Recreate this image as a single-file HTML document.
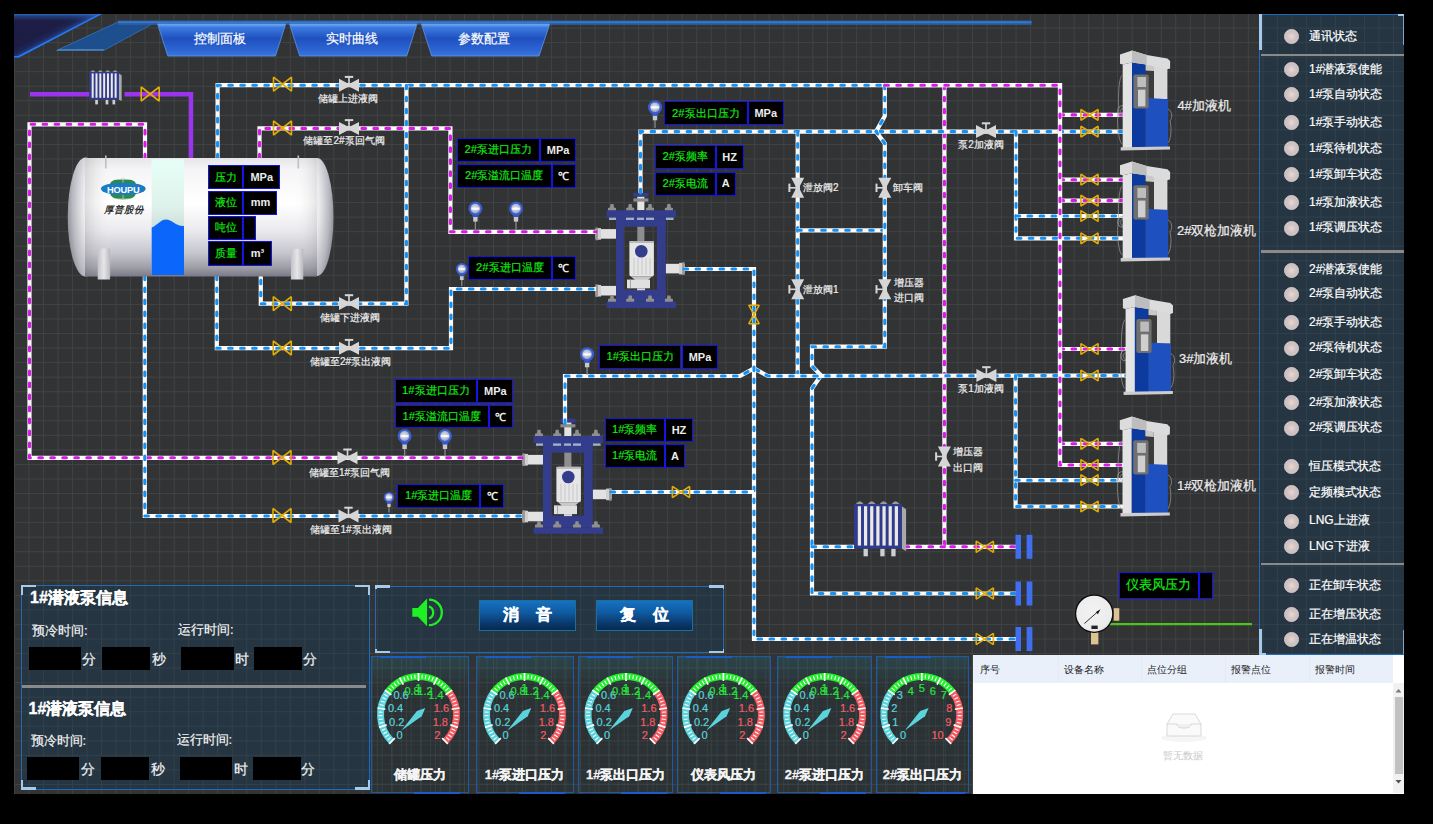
<!DOCTYPE html><html><head><meta charset="utf-8"><title>SCADA</title><style>
*{margin:0;padding:0;box-sizing:border-box}
html,body{width:1433px;height:824px;overflow:hidden;background:#000;font-family:"Liberation Sans",sans-serif}
#main{position:absolute;left:14px;top:14px;width:1390px;height:780px;background-color:#323335;
 background-image:linear-gradient(to right,#414244 1px,transparent 1px),linear-gradient(to bottom,#414244 1px,transparent 1px);
 background-size:14.52px 14.55px;background-position:0 -1px}
svg.full{position:absolute;left:0;top:0;width:1433px;height:824px}
.lb{position:absolute;white-space:nowrap;font-family:"Liberation Sans",sans-serif;-webkit-text-stroke:0.2px #f4f4f4}
.tb{position:absolute;background:#000;border:1.5px solid #1414e6;font-size:11px;color:#fff;font-weight:bold;
 display:flex;align-items:center;justify-content:center;white-space:nowrap;padding-bottom:0.5px}
.tb .g{color:#12f012;font-weight:normal;font-size:11.2px;-webkit-text-stroke:0.15px #12f012}
.tu{color:#ececec}
.tab{position:absolute;top:22.8px;height:32px;line-height:32px;text-align:center;color:#fff;font-size:13px;-webkit-text-stroke:0.2px #fff}
.panel{position:absolute;background-color:rgba(12,60,92,0.32);border:1.5px solid #1f6bb5}
.st{position:absolute;left:1284px;height:20px;width:120px}
.st i{position:absolute;left:0;top:2.5px;width:15px;height:15px;border-radius:50%;
 border:1.4px solid #ead0d0;background:radial-gradient(circle at 50% 50%,#f8d2d2 0,#d6c8c8 35%,#c2bfbf 70%,#bcbcbc 100%)}
.st span{position:absolute;left:25px;top:-1px;line-height:20px;font-size:12px;color:#fff;white-space:nowrap;-webkit-text-stroke:0.2px #fff}
.sep{position:absolute;height:2.5px;background:#8a8a8a}
.corner{position:absolute;width:15px;height:15px;border-color:#a6cbea;border-style:solid;border-width:0}
.blk{position:absolute;background:#000}
.it{position:absolute;font-size:13px;color:#f4f4f4;white-space:nowrap;-webkit-text-stroke:0.2px #f4f4f4}
.btn{position:absolute;top:600px;width:97px;height:31px;background:linear-gradient(to bottom,#1572c2 0%,#0f5aa0 40%,#0a3a6e 75%,#062a52 100%);
 border:1px solid #1f6e98;color:#fff;font-weight:bold;font-size:16px;line-height:27px;text-align:center;letter-spacing:17px;padding-left:17px;-webkit-text-stroke:0.3px #fff}
.gp{position:absolute;top:656px;height:137px;border:1px solid #1a5aa8;
 background-color:rgba(10,40,50,0.12);
 background-image:linear-gradient(to bottom,rgba(40,170,190,0.16),rgba(40,170,190,0) 22%),linear-gradient(to right,rgba(40,150,160,0.15) 1px,transparent 1px),linear-gradient(to bottom,rgba(60,120,130,0.09) 1px,transparent 1px);
 background-size:100% 100%,9.7px 9.7px,9.7px 9.7px}
.gt{position:absolute;top:764.8px;height:20px;line-height:20px;text-align:center;color:#f4f4f4;font-weight:bold;font-size:13px;white-space:nowrap;-webkit-text-stroke:0.3px #f4f4f4}
.th{position:absolute;top:663px;font-size:10px;color:#1a1a1a;white-space:nowrap}
</style></head><body><div id="main"></div><div class="panel" style="left:1259px;top:14px;width:145px;height:640.5px;border-width:1.5px 0 1.5px 1.5px"></div><div class="gp" style="left:371px;width:97.60000000000002px"></div><div style="position:absolute;left:380px;top:655.5px;width:46px;height:2px;background:#1a5cc8"></div><div style="position:absolute;left:414px;top:791.5px;width:46px;height:2px;background:#1a5cc8"></div><div class="gt" style="left:371px;width:97.60000000000002px">储罐压力</div><div class="gp" style="left:475.6px;width:98.0px"></div><div style="position:absolute;left:484.6px;top:655.5px;width:46px;height:2px;background:#1a5cc8"></div><div style="position:absolute;left:518.6px;top:791.5px;width:46px;height:2px;background:#1a5cc8"></div><div class="gt" style="left:475.6px;width:98.0px">1#泵进口压力</div><div class="gp" style="left:578px;width:95.39999999999998px"></div><div style="position:absolute;left:587px;top:655.5px;width:46px;height:2px;background:#1a5cc8"></div><div style="position:absolute;left:621px;top:791.5px;width:46px;height:2px;background:#1a5cc8"></div><div class="gt" style="left:578px;width:95.39999999999998px">1#泵出口压力</div><div class="gp" style="left:677px;width:93.70000000000005px"></div><div style="position:absolute;left:686px;top:655.5px;width:46px;height:2px;background:#1a5cc8"></div><div style="position:absolute;left:720px;top:791.5px;width:46px;height:2px;background:#1a5cc8"></div><div class="gt" style="left:677px;width:93.70000000000005px">仪表风压力</div><div class="gp" style="left:777px;width:94.79999999999995px"></div><div style="position:absolute;left:786px;top:655.5px;width:46px;height:2px;background:#1a5cc8"></div><div style="position:absolute;left:820px;top:791.5px;width:46px;height:2px;background:#1a5cc8"></div><div class="gt" style="left:777px;width:94.79999999999995px">2#泵进口压力</div><div class="gp" style="left:876px;width:93px"></div><div style="position:absolute;left:885px;top:655.5px;width:46px;height:2px;background:#1a5cc8"></div><div style="position:absolute;left:919px;top:791.5px;width:46px;height:2px;background:#1a5cc8"></div><div class="gt" style="left:876px;width:93px">2#泵出口压力</div><div style="position:absolute;left:1259px;top:14px;width:2.5px;height:36px;background:#a6cbea"></div><div style="position:absolute;left:1402.5px;top:14px;width:1.2px;height:31px;background:#7fa6c8"></div><div style="position:absolute;left:1398px;top:14px;width:6px;height:2px;background:#a6cbea"></div><div style="position:absolute;left:1259px;top:629px;width:2.5px;height:25.5px;background:#a6cbea"></div><div style="position:absolute;left:1259px;top:652.5px;width:7px;height:2px;background:#a6cbea"></div><div style="position:absolute;left:1402.5px;top:630px;width:1.2px;height:24px;background:#7fa6c8"></div><svg class="full" viewBox="0 0 1433 824"><defs>
<linearGradient id="tankV" x1="0" y1="0" x2="0" y2="1">
 <stop offset="0" stop-color="#e6e6ea"/><stop offset="0.1" stop-color="#f5f5f7"/><stop offset="0.38" stop-color="#ffffff"/>
 <stop offset="0.6" stop-color="#ececf0"/><stop offset="0.8" stop-color="#c6c6ce"/><stop offset="0.92" stop-color="#a0a0aa"/><stop offset="1" stop-color="#7a7a86"/>
</linearGradient>
<linearGradient id="tankH" x1="0" y1="0" x2="1" y2="0">
 <stop offset="0" stop-color="#777" stop-opacity="0.25"/><stop offset="0.12" stop-color="#fff" stop-opacity="0"/>
 <stop offset="0.9" stop-color="#fff" stop-opacity="0"/><stop offset="1" stop-color="#777" stop-opacity="0.2"/>
</linearGradient>
<radialGradient id="capL" cx="0.85" cy="0.38" r="0.9">
 <stop offset="0" stop-color="#ffffff"/><stop offset="0.45" stop-color="#ececf0"/><stop offset="0.8" stop-color="#b8b8c0"/><stop offset="1" stop-color="#8a8a94"/>
</radialGradient>
<radialGradient id="capR" cx="0.15" cy="0.38" r="0.9">
 <stop offset="0" stop-color="#ffffff"/><stop offset="0.45" stop-color="#ececf0"/><stop offset="0.8" stop-color="#b8b8c0"/><stop offset="1" stop-color="#8a8a94"/>
</radialGradient>
<linearGradient id="legG" x1="0" y1="0" x2="1" y2="0">
 <stop offset="0" stop-color="#c2c2c8"/><stop offset="0.5" stop-color="#e6e6ea"/><stop offset="1" stop-color="#b8b8be"/>
</linearGradient>
<linearGradient id="lvlG" x1="0" y1="0" x2="0" y2="1">
 <stop offset="0" stop-color="#e6fff6"/><stop offset="0.4" stop-color="#dff2ec"/><stop offset="0.62" stop-color="#c9ddd7"/><stop offset="1" stop-color="#b8ccc6"/>
</linearGradient>
<radialGradient id="sensg" cx="0.45" cy="0.45" r="0.6">
 <stop offset="0" stop-color="#e8eaf0"/><stop offset="0.6" stop-color="#b8bed0"/><stop offset="1" stop-color="#7f8fc8"/>
</radialGradient>
<radialGradient id="pgG" cx="0.45" cy="0.4" r="0.7">
 <stop offset="0" stop-color="#f2f2f2"/><stop offset="0.75" stop-color="#ececec"/><stop offset="1" stop-color="#d8d8d8"/>
</radialGradient>
<linearGradient id="tabG" x1="0" y1="0" x2="0" y2="1">
 <stop offset="0" stop-color="#78b0f6"/><stop offset="0.1" stop-color="#3d7ce0"/><stop offset="0.45" stop-color="#1f50bf"/><stop offset="0.85" stop-color="#2e68d4"/><stop offset="1" stop-color="#3a78e0"/>
</linearGradient>
<linearGradient id="cornD" gradientUnits="userSpaceOnUse" x1="55.4" y1="26.1" x2="60.5" y2="35.75">
 <stop offset="0" stop-color="#2a6ad8" stop-opacity="0"/><stop offset="0.5" stop-color="#2a6ad8" stop-opacity="0.12"/><stop offset="1" stop-color="#2a6ad8" stop-opacity="0.6"/>
</linearGradient>
<linearGradient id="cornT" gradientUnits="userSpaceOnUse" x1="0" y1="14" x2="0" y2="21">
 <stop offset="0" stop-color="#2f78d0" stop-opacity="0.8"/><stop offset="0.35" stop-color="#2f78d0" stop-opacity="0.35"/><stop offset="1" stop-color="#2f78d0" stop-opacity="0"/>
</linearGradient>
<linearGradient id="cornG" x1="0" y1="0" x2="1" y2="1">
 <stop offset="0" stop-color="#1c1c48"/><stop offset="0.55" stop-color="#1d1f4c"/><stop offset="1" stop-color="#2a6ad8"/>
</linearGradient>
</defs>
<path d="M14,14 L102,14 L19,57.5 L14,57.5 Z" fill="#1b1b47" opacity="0.93"/>
<path d="M14,14 L102,14 L19,57.5 L14,57.5 Z" fill="url(#cornD)"/>
<path d="M14,14 L102,14 L19,57.5 L14,57.5 Z" fill="url(#cornT)"/>
<path d="M102,14 L19,57.5 L14,57.5 L14,56 L18,56 L99,14 Z" fill="#2a78f2"/>
<path d="M56.5,50.5 L103.6,50.5 L156,22 L118,22 Z" fill="#1d4e8e" stroke="#3a72b8" stroke-width="0.8"/>
<path d="M56.5,50.5 L103.6,50.5 L104.5,49 L59,49 Z" fill="#5d8fcc" opacity="0.7"/>
<rect x="118" y="20.5" width="913.5" height="4.3" fill="#2a60aa"/>
<rect x="118" y="21.5" width="913.5" height="1.5" fill="#3a78c8"/>
<path d="M157.6,24 L285.7,24 L275.4,56 L167.8,56 Z" fill="url(#tabG)" stroke="#5b95e8" stroke-width="0.8"/><path d="M289.5,24 L417,24 L406.7,56 L299.7,56 Z" fill="url(#tabG)" stroke="#5b95e8" stroke-width="0.8"/><path d="M421.4,24 L549.7,24 L539,56 L431.7,56 Z" fill="url(#tabG)" stroke="#5b95e8" stroke-width="0.8"/><g transform="translate(590,185)"><rect x="5.5" y="44.1" width="20.5" height="9.600000000000001" fill="#e2e2e2"/><rect x="5.5" y="42.6" width="2.5" height="12.600000000000001" fill="#9a9a9a"/><rect x="8.0" y="43.1" width="3" height="11.600000000000001" fill="#d0d0d0"/><rect x="5.5" y="100.9" width="20.5" height="9.599999999999994" fill="#e2e2e2"/><rect x="5.5" y="99.4" width="2.5" height="12.599999999999994" fill="#9a9a9a"/><rect x="8.0" y="99.9" width="3" height="11.599999999999994" fill="#d0d0d0"/><rect x="75.7" y="78.8" width="18.89999999999999" height="9.600000000000009" fill="#e2e2e2"/><rect x="92.1" y="77.3" width="2.5" height="12.600000000000009" fill="#9a9a9a"/><rect x="89.1" y="77.8" width="3" height="11.600000000000009" fill="#d0d0d0"/><rect x="43.4" y="7.9" width="15" height="3.9" fill="#333d8c"/><rect x="47.3" y="11.8" width="7.1" height="13.4" fill="#e4e4e4"/><rect x="43.4" y="13.4" width="15" height="3.2" fill="#8c8c8c"/><rect x="16.6" y="25.2" width="69.4" height="7.1" fill="#333d8c"/><rect x="26" y="32.3" width="7.9" height="84.4" fill="#333d8c"/><rect x="67" y="32.3" width="8.7" height="84.4" fill="#333d8c"/><rect x="26" y="32.3" width="49.7" height="9.5" fill="#333d8c"/><rect x="26" y="104.9" width="49.7" height="11.8" fill="#333d8c"/><rect x="16.6" y="116.7" width="69.4" height="6.3" fill="#333d8c"/><path d="M20.5,19 L23.5,19 L24,22.5 L26,23 L26,25.2 L18,25.2 L18,23 L20,22.5 Z" fill="#8f8f8f"/><path d="M20.5,110.4 L23.5,110.4 L24,113.5 L26,114 L26,116.7 L18,116.7 L18,114 L20,113.5 Z" fill="#8f8f8f"/><path d="M38.7,19 L41.7,19 L42.2,22.5 L44.2,23 L44.2,25.2 L36.2,25.2 L36.2,23 L38.2,22.5 Z" fill="#8f8f8f"/><path d="M38.7,110.4 L41.7,110.4 L42.2,113.5 L44.2,114 L44.2,116.7 L36.2,116.7 L36.2,114 L38.2,113.5 Z" fill="#8f8f8f"/><path d="M58.5,19 L61.5,19 L62,22.5 L64,23 L64,25.2 L56,25.2 L56,23 L58,22.5 Z" fill="#8f8f8f"/><path d="M58.5,110.4 L61.5,110.4 L62,113.5 L64,114 L64,116.7 L56,116.7 L56,114 L58,113.5 Z" fill="#8f8f8f"/><path d="M77.4,19 L80.4,19 L80.9,22.5 L82.9,23 L82.9,25.2 L74.9,25.2 L74.9,23 L76.9,22.5 Z" fill="#8f8f8f"/><path d="M77.4,110.4 L80.4,110.4 L80.9,113.5 L82.9,114 L82.9,116.7 L74.9,116.7 L74.9,114 L76.9,113.5 Z" fill="#8f8f8f"/><rect x="19" y="32.6" width="7" height="2.4" fill="#9fb0c8"/><rect x="36" y="32.6" width="8" height="2.4" fill="#9fb0c8"/><rect x="47" y="32.6" width="7" height="2.4" fill="#9fb0c8"/><rect x="56" y="32.6" width="8" height="2.4" fill="#9fb0c8"/><rect x="76" y="32.6" width="7.599999999999994" height="2.4" fill="#9fb0c8"/><rect x="47.3" y="41.8" width="7.1" height="14.2" fill="#8e8e8e"/><rect x="39.4" y="56" width="24.5" height="35.5" rx="2" fill="#e6e6e6"/><rect x="39.4" y="56" width="24.5" height="2" fill="#b8b8b8"/><line x1="44" y1="73" x2="44" y2="90" stroke="#b5b5b5" stroke-width="0.6"/><line x1="48" y1="73" x2="48" y2="90" stroke="#b5b5b5" stroke-width="0.6"/><line x1="52" y1="73" x2="52" y2="90" stroke="#b5b5b5" stroke-width="0.6"/><line x1="56" y1="73" x2="56" y2="90" stroke="#b5b5b5" stroke-width="0.6"/><line x1="60" y1="73" x2="60" y2="90" stroke="#b5b5b5" stroke-width="0.6"/><path d="M41,91.5 L62,91.5 L58,95 L45,95 Z" fill="#c8c8c8"/><circle cx="51.3" cy="66.2" r="6.3" fill="#333d8c"/><rect x="37" y="94.6" width="23" height="8.7" fill="#e0e0e0"/><rect x="40" y="94.6" width="1" height="8.7" fill="#a8a8a8"/><rect x="47" y="103.3" width="8" height="2" fill="#d8d8d8"/></g><g transform="translate(517,410.8)"><rect x="5.5" y="44.1" width="20.5" height="9.600000000000001" fill="#e2e2e2"/><rect x="5.5" y="42.6" width="2.5" height="12.600000000000001" fill="#9a9a9a"/><rect x="8.0" y="43.1" width="3" height="11.600000000000001" fill="#d0d0d0"/><rect x="5.5" y="100.9" width="20.5" height="9.599999999999994" fill="#e2e2e2"/><rect x="5.5" y="99.4" width="2.5" height="12.599999999999994" fill="#9a9a9a"/><rect x="8.0" y="99.9" width="3" height="11.599999999999994" fill="#d0d0d0"/><rect x="75.7" y="78.8" width="18.89999999999999" height="9.600000000000009" fill="#e2e2e2"/><rect x="92.1" y="77.3" width="2.5" height="12.600000000000009" fill="#9a9a9a"/><rect x="89.1" y="77.8" width="3" height="11.600000000000009" fill="#d0d0d0"/><rect x="43.4" y="7.9" width="15" height="3.9" fill="#333d8c"/><rect x="47.3" y="11.8" width="7.1" height="13.4" fill="#e4e4e4"/><rect x="43.4" y="13.4" width="15" height="3.2" fill="#8c8c8c"/><rect x="16.6" y="25.2" width="69.4" height="7.1" fill="#333d8c"/><rect x="26" y="32.3" width="7.9" height="84.4" fill="#333d8c"/><rect x="67" y="32.3" width="8.7" height="84.4" fill="#333d8c"/><rect x="26" y="32.3" width="49.7" height="9.5" fill="#333d8c"/><rect x="26" y="104.9" width="49.7" height="11.8" fill="#333d8c"/><rect x="16.6" y="116.7" width="69.4" height="6.3" fill="#333d8c"/><path d="M20.5,19 L23.5,19 L24,22.5 L26,23 L26,25.2 L18,25.2 L18,23 L20,22.5 Z" fill="#8f8f8f"/><path d="M20.5,110.4 L23.5,110.4 L24,113.5 L26,114 L26,116.7 L18,116.7 L18,114 L20,113.5 Z" fill="#8f8f8f"/><path d="M38.7,19 L41.7,19 L42.2,22.5 L44.2,23 L44.2,25.2 L36.2,25.2 L36.2,23 L38.2,22.5 Z" fill="#8f8f8f"/><path d="M38.7,110.4 L41.7,110.4 L42.2,113.5 L44.2,114 L44.2,116.7 L36.2,116.7 L36.2,114 L38.2,113.5 Z" fill="#8f8f8f"/><path d="M58.5,19 L61.5,19 L62,22.5 L64,23 L64,25.2 L56,25.2 L56,23 L58,22.5 Z" fill="#8f8f8f"/><path d="M58.5,110.4 L61.5,110.4 L62,113.5 L64,114 L64,116.7 L56,116.7 L56,114 L58,113.5 Z" fill="#8f8f8f"/><path d="M77.4,19 L80.4,19 L80.9,22.5 L82.9,23 L82.9,25.2 L74.9,25.2 L74.9,23 L76.9,22.5 Z" fill="#8f8f8f"/><path d="M77.4,110.4 L80.4,110.4 L80.9,113.5 L82.9,114 L82.9,116.7 L74.9,116.7 L74.9,114 L76.9,113.5 Z" fill="#8f8f8f"/><rect x="19" y="32.6" width="7" height="2.4" fill="#9fb0c8"/><rect x="36" y="32.6" width="8" height="2.4" fill="#9fb0c8"/><rect x="47" y="32.6" width="7" height="2.4" fill="#9fb0c8"/><rect x="56" y="32.6" width="8" height="2.4" fill="#9fb0c8"/><rect x="76" y="32.6" width="7.599999999999994" height="2.4" fill="#9fb0c8"/><rect x="47.3" y="41.8" width="7.1" height="14.2" fill="#8e8e8e"/><rect x="39.4" y="56" width="24.5" height="35.5" rx="2" fill="#e6e6e6"/><rect x="39.4" y="56" width="24.5" height="2" fill="#b8b8b8"/><line x1="44" y1="73" x2="44" y2="90" stroke="#b5b5b5" stroke-width="0.6"/><line x1="48" y1="73" x2="48" y2="90" stroke="#b5b5b5" stroke-width="0.6"/><line x1="52" y1="73" x2="52" y2="90" stroke="#b5b5b5" stroke-width="0.6"/><line x1="56" y1="73" x2="56" y2="90" stroke="#b5b5b5" stroke-width="0.6"/><line x1="60" y1="73" x2="60" y2="90" stroke="#b5b5b5" stroke-width="0.6"/><path d="M41,91.5 L62,91.5 L58,95 L45,95 Z" fill="#c8c8c8"/><circle cx="51.3" cy="66.2" r="6.3" fill="#333d8c"/><rect x="37" y="94.6" width="23" height="8.7" fill="#e0e0e0"/><rect x="40" y="94.6" width="1" height="8.7" fill="#a8a8a8"/><rect x="47" y="103.3" width="8" height="2" fill="#d8d8d8"/></g><polyline points="30,94.2 89.5,94.2" fill="none" stroke="#9b34ee" stroke-width="4.4"/><polyline points="124.5,94.2 191,94.2 191,158" fill="none" stroke="#9b34ee" stroke-width="4.4"/><polyline points="145,158 145,124.3 29.5,124.3 29.5,457.8 522,457.8" fill="none" stroke="#fafafa" stroke-width="4.2" stroke-linejoin="miter"/><polyline points="145,158 145,124.3 29.5,124.3 29.5,457.8 522,457.8" fill="none" stroke="#d41ce4" stroke-width="3.1" stroke-dasharray="3.6 8.4" stroke-linecap="round"/><polyline points="259.5,158 259.5,128.4 450.4,128.4 450.4,231.8 596,231.8" fill="none" stroke="#fafafa" stroke-width="4.2" stroke-linejoin="miter"/><polyline points="259.5,158 259.5,128.4 450.4,128.4 450.4,231.8 596,231.8" fill="none" stroke="#d41ce4" stroke-width="3.1" stroke-dasharray="3.6 8.4" stroke-linecap="round"/><polyline points="1060,114.9 1126,114.9" fill="none" stroke="#fafafa" stroke-width="4.2" stroke-linejoin="miter"/><polyline points="1060,114.9 1126,114.9" fill="none" stroke="#d41ce4" stroke-width="3.1" stroke-dasharray="3.6 8.4" stroke-linecap="round"/><polyline points="1060,179.7 1126,179.7" fill="none" stroke="#fafafa" stroke-width="4.2" stroke-linejoin="miter"/><polyline points="1060,179.7 1126,179.7" fill="none" stroke="#d41ce4" stroke-width="3.1" stroke-dasharray="3.6 8.4" stroke-linecap="round"/><polyline points="1060,200.6 1126,200.6" fill="none" stroke="#fafafa" stroke-width="4.2" stroke-linejoin="miter"/><polyline points="1060,200.6 1126,200.6" fill="none" stroke="#d41ce4" stroke-width="3.1" stroke-dasharray="3.6 8.4" stroke-linecap="round"/><polyline points="1060,349 1126,349" fill="none" stroke="#fafafa" stroke-width="4.2" stroke-linejoin="miter"/><polyline points="1060,349 1126,349" fill="none" stroke="#d41ce4" stroke-width="3.1" stroke-dasharray="3.6 8.4" stroke-linecap="round"/><polyline points="1060,443.8 1126,443.8" fill="none" stroke="#fafafa" stroke-width="4.2" stroke-linejoin="miter"/><polyline points="1060,443.8 1126,443.8" fill="none" stroke="#d41ce4" stroke-width="3.1" stroke-dasharray="3.6 8.4" stroke-linecap="round"/><polyline points="884.8,85.2 1060,85.2 1060,465 1126,465" fill="none" stroke="#fafafa" stroke-width="4.2" stroke-linejoin="miter"/><polyline points="884.8,85.2 1060,85.2 1060,465 1126,465" fill="none" stroke="#d41ce4" stroke-width="3.1" stroke-dasharray="3.6 8.4" stroke-linecap="round"/><polyline points="944.4,85.2 944.4,546.8 1016,546.8" fill="none" stroke="#fafafa" stroke-width="4.2" stroke-linejoin="miter"/><polyline points="944.4,85.2 944.4,546.8 1016,546.8" fill="none" stroke="#d41ce4" stroke-width="3.1" stroke-dasharray="3.6 8.4" stroke-linecap="round"/><polyline points="905,546.8 944.4,546.8" fill="none" stroke="#fafafa" stroke-width="4.2" stroke-linejoin="miter"/><polyline points="905,546.8 944.4,546.8" fill="none" stroke="#d41ce4" stroke-width="3.1" stroke-dasharray="3.6 8.4" stroke-linecap="round"/><polyline points="217.6,158 217.6,85.2 884.8,85.2" fill="none" stroke="#fafafa" stroke-width="4.2" stroke-linejoin="miter"/><polyline points="217.6,158 217.6,85.2 884.8,85.2" fill="none" stroke="#1890f0" stroke-width="3.1" stroke-dasharray="3.6 8.4" stroke-linecap="round"/><polyline points="406.4,85.2 406.4,303.7 260.8,303.7 260.8,276" fill="none" stroke="#fafafa" stroke-width="4.2" stroke-linejoin="miter"/><polyline points="406.4,85.2 406.4,303.7 260.8,303.7 260.8,276" fill="none" stroke="#1890f0" stroke-width="3.1" stroke-dasharray="3.6 8.4" stroke-linecap="round"/><polyline points="216.8,276 216.8,348.2 451,348.2 451,289 596,289" fill="none" stroke="#fafafa" stroke-width="4.2" stroke-linejoin="miter"/><polyline points="216.8,276 216.8,348.2 451,348.2 451,289 596,289" fill="none" stroke="#1890f0" stroke-width="3.1" stroke-dasharray="3.6 8.4" stroke-linecap="round"/><polyline points="144.8,276 144.8,516 522,516" fill="none" stroke="#fafafa" stroke-width="4.2" stroke-linejoin="miter"/><polyline points="144.8,276 144.8,516 522,516" fill="none" stroke="#1890f0" stroke-width="3.1" stroke-dasharray="3.6 8.4" stroke-linecap="round"/><polyline points="640.5,193 640.5,131.6 1126,131.6" fill="none" stroke="#fafafa" stroke-width="4.2" stroke-linejoin="miter"/><polyline points="640.5,193 640.5,131.6 1126,131.6" fill="none" stroke="#1890f0" stroke-width="3.1" stroke-dasharray="3.6 8.4" stroke-linecap="round"/><polyline points="797.7,131.6 797.7,375.5" fill="none" stroke="#fafafa" stroke-width="4.2" stroke-linejoin="miter"/><polyline points="797.7,131.6 797.7,375.5" fill="none" stroke="#1890f0" stroke-width="3.1" stroke-dasharray="3.6 8.4" stroke-linecap="round"/><polyline points="797.7,230.3 884.8,230.3" fill="none" stroke="#fafafa" stroke-width="4.2" stroke-linejoin="miter"/><polyline points="797.7,230.3 884.8,230.3" fill="none" stroke="#1890f0" stroke-width="3.1" stroke-dasharray="3.6 8.4" stroke-linecap="round"/><polyline points="884.8,85.2 884.8,116 876,131.6 884.8,143.5 884.8,346.7 812,346.7 812,366 821,375.5 812,388.5 812,593.5 1016,593.5" fill="none" stroke="#fafafa" stroke-width="4.2" stroke-linejoin="miter"/><polyline points="884.8,85.2 884.8,116 876,131.6 884.8,143.5 884.8,346.7 812,346.7 812,366 821,375.5 812,388.5 812,593.5 1016,593.5" fill="none" stroke="#1890f0" stroke-width="3.1" stroke-dasharray="3.6 8.4" stroke-linecap="round"/><polyline points="812,546.8 855,546.8" fill="none" stroke="#fafafa" stroke-width="4.2" stroke-linejoin="miter"/><polyline points="812,546.8 855,546.8" fill="none" stroke="#1890f0" stroke-width="3.1" stroke-dasharray="3.6 8.4" stroke-linecap="round"/><polyline points="565,423.5 565,376 740,376 754,368.5 768,376 1126,375.5" fill="none" stroke="#fafafa" stroke-width="4.2" stroke-linejoin="miter"/><polyline points="565,423.5 565,376 740,376 754,368.5 768,376 1126,375.5" fill="none" stroke="#1890f0" stroke-width="3.1" stroke-dasharray="3.6 8.4" stroke-linecap="round"/><polyline points="684,269 754,269 754,639 1016,639" fill="none" stroke="#fafafa" stroke-width="4.2" stroke-linejoin="miter"/><polyline points="684,269 754,269 754,639 1016,639" fill="none" stroke="#1890f0" stroke-width="3.1" stroke-dasharray="3.6 8.4" stroke-linecap="round"/><polyline points="611,492 754,492" fill="none" stroke="#fafafa" stroke-width="4.2" stroke-linejoin="miter"/><polyline points="611,492 754,492" fill="none" stroke="#1890f0" stroke-width="3.1" stroke-dasharray="3.6 8.4" stroke-linecap="round"/><polyline points="1016,131.6 1016,238.3 1126,238.3" fill="none" stroke="#fafafa" stroke-width="4.2" stroke-linejoin="miter"/><polyline points="1016,131.6 1016,238.3 1126,238.3" fill="none" stroke="#1890f0" stroke-width="3.1" stroke-dasharray="3.6 8.4" stroke-linecap="round"/><polyline points="1016,216 1126,216" fill="none" stroke="#fafafa" stroke-width="4.2" stroke-linejoin="miter"/><polyline points="1016,216 1126,216" fill="none" stroke="#1890f0" stroke-width="3.1" stroke-dasharray="3.6 8.4" stroke-linecap="round"/><polyline points="1015.6,375.5 1015.6,506.5 1126,506.5" fill="none" stroke="#fafafa" stroke-width="4.2" stroke-linejoin="miter"/><polyline points="1015.6,375.5 1015.6,506.5 1126,506.5" fill="none" stroke="#1890f0" stroke-width="3.1" stroke-dasharray="3.6 8.4" stroke-linecap="round"/><polyline points="1015.6,480.2 1126,480.2" fill="none" stroke="#fafafa" stroke-width="4.2" stroke-linejoin="miter"/><polyline points="1015.6,480.2 1126,480.2" fill="none" stroke="#1890f0" stroke-width="3.1" stroke-dasharray="3.6 8.4" stroke-linecap="round"/><polyline points="884.8,85.2 1060,85.2 1060,465 1126,465" fill="none" stroke="#fafafa" stroke-width="4.2" stroke-linejoin="miter"/><polyline points="884.8,85.2 1060,85.2 1060,465 1126,465" fill="none" stroke="#d41ce4" stroke-width="3.1" stroke-dasharray="3.6 8.4" stroke-linecap="round"/><rect x="1015.5" y="534.8" width="5.5" height="24" fill="#3f6ef0"/><rect x="1026.6" y="534.8" width="5.8" height="24" fill="#3f6ef0"/><rect x="1015.5" y="581.5" width="5.5" height="24" fill="#3f6ef0"/><rect x="1026.6" y="581.5" width="5.8" height="24" fill="#3f6ef0"/><rect x="1015.5" y="627" width="5.5" height="24" fill="#3f6ef0"/><rect x="1026.6" y="627" width="5.8" height="24" fill="#3f6ef0"/><g transform="translate(282.5,84.2)"><path d="M-9,-7 L-9,7 L9,-7 L9,7 Z" fill="none" stroke="#e2ac06" stroke-width="1.6" stroke-linejoin="miter" stroke-miterlimit="1.5"/></g><g transform="translate(282.5,128)"><path d="M-9,-7 L-9,7 L9,-7 L9,7 Z" fill="none" stroke="#e2ac06" stroke-width="1.6" stroke-linejoin="miter" stroke-miterlimit="1.5"/></g><g transform="translate(282.3,303.7)"><path d="M-9,-7 L-9,7 L9,-7 L9,7 Z" fill="none" stroke="#e2ac06" stroke-width="1.6" stroke-linejoin="miter" stroke-miterlimit="1.5"/></g><g transform="translate(282.3,348)"><path d="M-9,-7 L-9,7 L9,-7 L9,7 Z" fill="none" stroke="#e2ac06" stroke-width="1.6" stroke-linejoin="miter" stroke-miterlimit="1.5"/></g><g transform="translate(282,457.5)"><path d="M-9,-7 L-9,7 L9,-7 L9,7 Z" fill="none" stroke="#e2ac06" stroke-width="1.6" stroke-linejoin="miter" stroke-miterlimit="1.5"/></g><g transform="translate(282,515.5)"><path d="M-9,-7 L-9,7 L9,-7 L9,7 Z" fill="none" stroke="#e2ac06" stroke-width="1.6" stroke-linejoin="miter" stroke-miterlimit="1.5"/></g><g transform="translate(150.2,94)"><path d="M-9,-7 L-9,7 L9,-7 L9,7 Z" fill="none" stroke="#e2ac06" stroke-width="1.6" stroke-linejoin="miter" stroke-miterlimit="1.5"/></g><g transform="translate(681,492)"><path d="M-8.6,-5.6 L-8.6,5.6 L8.6,-5.6 L8.6,5.6 Z" fill="none" stroke="#e2ac06" stroke-width="1.6" stroke-linejoin="miter" stroke-miterlimit="1.5"/></g><g transform="translate(984.8,546.8)"><path d="M-8.6,-5.6 L-8.6,5.6 L8.6,-5.6 L8.6,5.6 Z" fill="none" stroke="#e2ac06" stroke-width="1.6" stroke-linejoin="miter" stroke-miterlimit="1.5"/></g><g transform="translate(984.8,593.5)"><path d="M-8.6,-5.6 L-8.6,5.6 L8.6,-5.6 L8.6,5.6 Z" fill="none" stroke="#e2ac06" stroke-width="1.6" stroke-linejoin="miter" stroke-miterlimit="1.5"/></g><g transform="translate(984.8,639)"><path d="M-8.6,-5.6 L-8.6,5.6 L8.6,-5.6 L8.6,5.6 Z" fill="none" stroke="#e2ac06" stroke-width="1.6" stroke-linejoin="miter" stroke-miterlimit="1.5"/></g><g transform="translate(1089.5,114.9)"><path d="M-8.6,-5.4 L-8.6,5.4 L8.6,-5.4 L8.6,5.4 Z" fill="none" stroke="#e2ac06" stroke-width="1.6" stroke-linejoin="miter" stroke-miterlimit="1.5"/></g><g transform="translate(1089.5,131.6)"><path d="M-8.6,-5.4 L-8.6,5.4 L8.6,-5.4 L8.6,5.4 Z" fill="none" stroke="#e2ac06" stroke-width="1.6" stroke-linejoin="miter" stroke-miterlimit="1.5"/></g><g transform="translate(1089.5,179.7)"><path d="M-8.6,-5.4 L-8.6,5.4 L8.6,-5.4 L8.6,5.4 Z" fill="none" stroke="#e2ac06" stroke-width="1.6" stroke-linejoin="miter" stroke-miterlimit="1.5"/></g><g transform="translate(1089.5,200.6)"><path d="M-8.6,-5.4 L-8.6,5.4 L8.6,-5.4 L8.6,5.4 Z" fill="none" stroke="#e2ac06" stroke-width="1.6" stroke-linejoin="miter" stroke-miterlimit="1.5"/></g><g transform="translate(1089.5,216)"><path d="M-8.6,-5.4 L-8.6,5.4 L8.6,-5.4 L8.6,5.4 Z" fill="none" stroke="#e2ac06" stroke-width="1.6" stroke-linejoin="miter" stroke-miterlimit="1.5"/></g><g transform="translate(1089.5,238.3)"><path d="M-8.6,-5.4 L-8.6,5.4 L8.6,-5.4 L8.6,5.4 Z" fill="none" stroke="#e2ac06" stroke-width="1.6" stroke-linejoin="miter" stroke-miterlimit="1.5"/></g><g transform="translate(1089.5,349)"><path d="M-8.6,-5.4 L-8.6,5.4 L8.6,-5.4 L8.6,5.4 Z" fill="none" stroke="#e2ac06" stroke-width="1.6" stroke-linejoin="miter" stroke-miterlimit="1.5"/></g><g transform="translate(1089.5,375.5)"><path d="M-8.6,-5.4 L-8.6,5.4 L8.6,-5.4 L8.6,5.4 Z" fill="none" stroke="#e2ac06" stroke-width="1.6" stroke-linejoin="miter" stroke-miterlimit="1.5"/></g><g transform="translate(1089.5,443.8)"><path d="M-8.6,-5.4 L-8.6,5.4 L8.6,-5.4 L8.6,5.4 Z" fill="none" stroke="#e2ac06" stroke-width="1.6" stroke-linejoin="miter" stroke-miterlimit="1.5"/></g><g transform="translate(1089.5,465)"><path d="M-8.6,-5.4 L-8.6,5.4 L8.6,-5.4 L8.6,5.4 Z" fill="none" stroke="#e2ac06" stroke-width="1.6" stroke-linejoin="miter" stroke-miterlimit="1.5"/></g><g transform="translate(1089.5,480.2)"><path d="M-8.6,-5.4 L-8.6,5.4 L8.6,-5.4 L8.6,5.4 Z" fill="none" stroke="#e2ac06" stroke-width="1.6" stroke-linejoin="miter" stroke-miterlimit="1.5"/></g><g transform="translate(1089.5,506.5)"><path d="M-8.6,-5.4 L-8.6,5.4 L8.6,-5.4 L8.6,5.4 Z" fill="none" stroke="#e2ac06" stroke-width="1.6" stroke-linejoin="miter" stroke-miterlimit="1.5"/></g><g transform="translate(754,314.5) rotate(90)"><path d="M-9.2,-5.2 L-9.2,5.2 L9.2,-5.2 L9.2,5.2 Z" fill="none" stroke="#e2ac06" stroke-width="1.6" stroke-linejoin="miter" stroke-miterlimit="1.5"/></g><g transform="translate(349,85.2)"><path d="M-10,-6.5 L-1,-1.8 L1,-1.8 L10,-6.5 L10,6.5 L1,1.8 L-1,1.8 L-10,6.5 Z" fill="#d6d6d6"/><rect x="-0.8" y="-8" width="1.6" height="8" fill="#d6d6d6"/><rect x="-4.2" y="-9.3" width="8.4" height="2" fill="#d6d6d6"/></g><g transform="translate(349,128.4)"><path d="M-10,-6.5 L-1,-1.8 L1,-1.8 L10,-6.5 L10,6.5 L1,1.8 L-1,1.8 L-10,6.5 Z" fill="#d6d6d6"/><rect x="-0.8" y="-8" width="1.6" height="8" fill="#d6d6d6"/><rect x="-4.2" y="-9.3" width="8.4" height="2" fill="#d6d6d6"/></g><g transform="translate(349,303.5)"><path d="M-10,-6.5 L-1,-1.8 L1,-1.8 L10,-6.5 L10,6.5 L1,1.8 L-1,1.8 L-10,6.5 Z" fill="#d6d6d6"/><rect x="-0.8" y="-8" width="1.6" height="8" fill="#d6d6d6"/><rect x="-4.2" y="-9.3" width="8.4" height="2" fill="#d6d6d6"/></g><g transform="translate(349,348.2)"><path d="M-10,-6.5 L-1,-1.8 L1,-1.8 L10,-6.5 L10,6.5 L1,1.8 L-1,1.8 L-10,6.5 Z" fill="#d6d6d6"/><rect x="-0.8" y="-8" width="1.6" height="8" fill="#d6d6d6"/><rect x="-4.2" y="-9.3" width="8.4" height="2" fill="#d6d6d6"/></g><g transform="translate(347.5,457.8)"><path d="M-10,-6.5 L-1,-1.8 L1,-1.8 L10,-6.5 L10,6.5 L1,1.8 L-1,1.8 L-10,6.5 Z" fill="#d6d6d6"/><rect x="-0.8" y="-8" width="1.6" height="8" fill="#d6d6d6"/><rect x="-4.2" y="-9.3" width="8.4" height="2" fill="#d6d6d6"/></g><g transform="translate(348.5,516)"><path d="M-10,-6.5 L-1,-1.8 L1,-1.8 L10,-6.5 L10,6.5 L1,1.8 L-1,1.8 L-10,6.5 Z" fill="#d6d6d6"/><rect x="-0.8" y="-8" width="1.6" height="8" fill="#d6d6d6"/><rect x="-4.2" y="-9.3" width="8.4" height="2" fill="#d6d6d6"/></g><g transform="translate(986,131.6)"><path d="M-10,-6.5 L-1,-1.8 L1,-1.8 L10,-6.5 L10,6.5 L1,1.8 L-1,1.8 L-10,6.5 Z" fill="#d6d6d6"/><rect x="-0.8" y="-8" width="1.6" height="8" fill="#d6d6d6"/><rect x="-4.2" y="-9.3" width="8.4" height="2" fill="#d6d6d6"/></g><g transform="translate(986.4,375.5)"><path d="M-10,-6.5 L-1,-1.8 L1,-1.8 L10,-6.5 L10,6.5 L1,1.8 L-1,1.8 L-10,6.5 Z" fill="#d6d6d6"/><rect x="-0.8" y="-8" width="1.6" height="8" fill="#d6d6d6"/><rect x="-4.2" y="-9.3" width="8.4" height="2" fill="#d6d6d6"/></g><g transform="translate(797.7,187.8) rotate(-90)"><path d="M-10,-6.5 L-1,-1.8 L1,-1.8 L10,-6.5 L10,6.5 L1,1.8 L-1,1.8 L-10,6.5 Z" fill="#d6d6d6"/><rect x="-0.8" y="-8" width="1.6" height="8" fill="#d6d6d6"/><rect x="-4.2" y="-9.3" width="8.4" height="2" fill="#d6d6d6"/></g><g transform="translate(884.8,187.8) rotate(-90)"><path d="M-10,-6.5 L-1,-1.8 L1,-1.8 L10,-6.5 L10,6.5 L1,1.8 L-1,1.8 L-10,6.5 Z" fill="#d6d6d6"/><rect x="-0.8" y="-8" width="1.6" height="8" fill="#d6d6d6"/><rect x="-4.2" y="-9.3" width="8.4" height="2" fill="#d6d6d6"/></g><g transform="translate(797.7,289.3) rotate(-90)"><path d="M-10,-6.5 L-1,-1.8 L1,-1.8 L10,-6.5 L10,6.5 L1,1.8 L-1,1.8 L-10,6.5 Z" fill="#d6d6d6"/><rect x="-0.8" y="-8" width="1.6" height="8" fill="#d6d6d6"/><rect x="-4.2" y="-9.3" width="8.4" height="2" fill="#d6d6d6"/></g><g transform="translate(884.8,289.3) rotate(-90)"><path d="M-10,-6.5 L-1,-1.8 L1,-1.8 L10,-6.5 L10,6.5 L1,1.8 L-1,1.8 L-10,6.5 Z" fill="#d6d6d6"/><rect x="-0.8" y="-8" width="1.6" height="8" fill="#d6d6d6"/><rect x="-4.2" y="-9.3" width="8.4" height="2" fill="#d6d6d6"/></g><g transform="translate(944.4,456.5) rotate(-90)"><path d="M-10,-6.5 L-1,-1.8 L1,-1.8 L10,-6.5 L10,6.5 L1,1.8 L-1,1.8 L-10,6.5 Z" fill="#d6d6d6"/><rect x="-0.8" y="-8" width="1.6" height="8" fill="#d6d6d6"/><rect x="-4.2" y="-9.3" width="8.4" height="2" fill="#d6d6d6"/></g><ellipse cx="317" cy="217" rx="16.5" ry="59" fill="url(#capR)"/><ellipse cx="85.5" cy="217" rx="17.8" ry="59.5" fill="url(#capL)"/><rect x="85" y="158" width="232" height="118.5" fill="url(#tankV)"/><rect x="85" y="158" width="232" height="118.5" fill="url(#tankH)"/><rect x="105" y="155.5" width="1.6" height="13" fill="#c0c0c0"/><rect x="297.5" y="155.5" width="1.6" height="13" fill="#c0c0c0"/><rect x="97.7" y="248.5" width="12.4" height="31" fill="url(#legG)"/><rect x="291" y="248.8" width="12.3" height="30.7" fill="url(#legG)"/><rect x="151.7" y="159.3" width="32.3" height="115.6" fill="url(#lvlG)"/><path d="M151.7,227.5 C157,226 160,219.5 166,219.5 C172,219.5 176,226.5 184,226 L184,274.9 L151.7,274.9 Z" fill="#0b67fb"/><path d="M110,184 Q111,179 123,178.8 Q135,179 136,184 Z" fill="#2f8a45"/><path d="M110,193.5 Q111,199.3 123,199.5 Q135,199.3 136,193.5 Z" fill="#2f8a45"/><path d="M116,179.5 L130,179.5 M123,178.8 L123,184 M116,199 L130,199 M123,194 L123,199.5" stroke="#d8f0d8" stroke-width="0.6"/><ellipse cx="123.3" cy="188.7" rx="22.4" ry="6.3" fill="#1b7cc4"/><text x="123.3" y="192.6" text-anchor="middle" font-family="Liberation Sans" font-weight="bold" font-size="9.3" fill="#fff" letter-spacing="-0.2">HOUPU</text><text x="123.5" y="212.5" text-anchor="middle" font-family="Liberation Serif" font-style="italic" font-size="9.5" fill="#111" stroke="#111" stroke-width="0.25">厚普股份</text><g><rect x="95.24" y="99.7" width="2.673" height="4.7090000000000005" fill="#cfcfcf"/><rect x="105.63499999999999" y="99.7" width="2.673" height="4.7090000000000005" fill="#cfcfcf"/><rect x="112.466" y="99.7" width="2.673" height="4.7090000000000005" fill="#cfcfcf"/><path d="M119.0,73.385 L121.673,75.324 L121.673,101.08500000000001 L119.0,99.7 Z" fill="#a8a8a8"/><path d="M90.48799999999999,72 Q92.86399999999999,68.676 95.24,72" fill="#9a9a9a"/><path d="M97.91299999999998,72 Q100.28899999999999,68.676 102.66499999999999,72" fill="#9a9a9a"/><path d="M105.33799999999998,72 Q107.71399999999998,68.676 110.08999999999999,72" fill="#9a9a9a"/><path d="M112.76299999999998,72 Q115.13899999999998,68.676 117.51499999999999,72" fill="#9a9a9a"/><rect x="89.3" y="72" width="29.7" height="27.7" fill="#2f3c8e"/><rect x="91.68" y="73.39" width="1.99" height="24.38" fill="#ece9e4"/><rect x="95.50" y="73.39" width="1.99" height="24.38" fill="#ece9e4"/><rect x="99.33" y="73.39" width="1.99" height="24.38" fill="#ece9e4"/><rect x="103.16" y="73.39" width="1.99" height="24.38" fill="#ece9e4"/><rect x="106.98" y="73.39" width="1.99" height="24.38" fill="#ece9e4"/><rect x="110.81" y="73.39" width="1.99" height="24.38" fill="#ece9e4"/><rect x="114.63" y="73.39" width="1.99" height="24.38" fill="#ece9e4"/></g><g><rect x="863.56" y="548.7" width="4.302" height="7.599000000000001" fill="#cfcfcf"/><rect x="880.29" y="548.7" width="4.302" height="7.599000000000001" fill="#cfcfcf"/><rect x="891.284" y="548.7" width="4.302" height="7.599000000000001" fill="#cfcfcf"/><path d="M901.8,506.235 L906.102,509.364 L906.102,550.935 L901.8,548.7 Z" fill="#a8a8a8"/><path d="M855.912,504 Q859.736,498.636 863.56,504" fill="#9a9a9a"/><path d="M867.8620000000001,504 Q871.686,498.636 875.51,504" fill="#9a9a9a"/><path d="M879.812,504 Q883.636,498.636 887.4599999999999,504" fill="#9a9a9a"/><path d="M891.7620000000001,504 Q895.586,498.636 899.41,504" fill="#9a9a9a"/><rect x="854" y="504" width="47.8" height="44.7" fill="#2f3c8e"/><rect x="857.82" y="506.24" width="3.20" height="39.34" fill="#ece9e4"/><rect x="863.98" y="506.24" width="3.20" height="39.34" fill="#ece9e4"/><rect x="870.14" y="506.24" width="3.20" height="39.34" fill="#ece9e4"/><rect x="876.30" y="506.24" width="3.20" height="39.34" fill="#ece9e4"/><rect x="882.46" y="506.24" width="3.20" height="39.34" fill="#ece9e4"/><rect x="888.62" y="506.24" width="3.20" height="39.34" fill="#ece9e4"/><rect x="894.77" y="506.24" width="3.20" height="39.34" fill="#ece9e4"/></g><g transform="translate(1110,45)"><path d="M12.5,30 C8,32 8,60 9,66 C6,70 8,96 12,99" fill="none" stroke="#9a9a9a" stroke-width="0.7"/><ellipse cx="12" cy="66" rx="4.3" ry="5.2" fill="none" stroke="#a0a0a0" stroke-width="0.8"/><ellipse cx="13" cy="66.5" rx="2.5" ry="3.4" fill="none" stroke="#a0a0a0" stroke-width="0.6"/><path d="M58,64 C62,66 63,72 60,76 C62,84 61,96 57,99" fill="none" stroke="#9a9a9a" stroke-width="0.7"/><path d="M12.7,19.4 L22,17.4 L22,103.5 L12.7,103.5 Z" fill="#e3e3e3"/><rect x="44" y="16" width="13.4" height="38" fill="#d9d9d9"/><rect x="35.4" y="18.7" width="8.6" height="35" fill="#3b3b3b"/><path d="M35.4,18.7 L44,21 L44,26 L35.4,25.4 Z" fill="#c9c9c9"/><path d="M22,17.4 L35.4,19.2 L35.4,103.5 L22,103.5 Z" fill="#0d3a9f"/><path d="M35.4,52.8 L58.1,54.2 L58.1,102.8 L35.4,103.5 Z" fill="#1f50bf"/><path d="M10,9.4 L22,5.6 L36.7,10 L57.4,13.4 L60.1,16 L60.1,23.4 L57.4,24.3 L44,21.4 L36,19.4 L22,17.4 L12.7,19.4 L10,18.7 Z" fill="#dcdcdc"/><path d="M22,5.6 L36.7,10 L36.7,19.6 L22,17.4 Z" fill="#bdbdbd"/><rect x="23.4" y="29.4" width="15.3" height="34.1" rx="2" fill="#707070"/><rect x="27.4" y="32" width="8.6" height="10" fill="#bdbdbd"/><rect x="28" y="44.7" width="7.4" height="16.7" fill="#cfcfcf"/><path d="M10.7,102.2 L60,101.5 L60,104.5 L10.7,105.5 Z" fill="#cdcdcd"/></g><g transform="translate(1110,155.9)"><path d="M12.5,30 C8,32 8,60 9,66 C6,70 8,96 12,99" fill="none" stroke="#9a9a9a" stroke-width="0.7"/><ellipse cx="12" cy="66" rx="4.3" ry="5.2" fill="none" stroke="#a0a0a0" stroke-width="0.8"/><ellipse cx="13" cy="66.5" rx="2.5" ry="3.4" fill="none" stroke="#a0a0a0" stroke-width="0.6"/><path d="M58,64 C62,66 63,72 60,76 C62,84 61,96 57,99" fill="none" stroke="#9a9a9a" stroke-width="0.7"/><path d="M12.7,19.4 L22,17.4 L22,103.5 L12.7,103.5 Z" fill="#e3e3e3"/><rect x="44" y="16" width="13.4" height="38" fill="#d9d9d9"/><rect x="35.4" y="18.7" width="8.6" height="35" fill="#3b3b3b"/><path d="M35.4,18.7 L44,21 L44,26 L35.4,25.4 Z" fill="#c9c9c9"/><path d="M22,17.4 L35.4,19.2 L35.4,103.5 L22,103.5 Z" fill="#0d3a9f"/><path d="M35.4,52.8 L58.1,54.2 L58.1,102.8 L35.4,103.5 Z" fill="#1f50bf"/><path d="M10,9.4 L22,5.6 L36.7,10 L57.4,13.4 L60.1,16 L60.1,23.4 L57.4,24.3 L44,21.4 L36,19.4 L22,17.4 L12.7,19.4 L10,18.7 Z" fill="#dcdcdc"/><path d="M22,5.6 L36.7,10 L36.7,19.6 L22,17.4 Z" fill="#bdbdbd"/><rect x="23.4" y="29.4" width="15.3" height="34.1" rx="2" fill="#707070"/><rect x="27.4" y="32" width="8.6" height="10" fill="#bdbdbd"/><rect x="28" y="44.7" width="7.4" height="16.7" fill="#cfcfcf"/><path d="M10.7,102.2 L60,101.5 L60,104.5 L10.7,105.5 Z" fill="#cdcdcd"/></g><g transform="translate(1112.9,289.6)"><path d="M12.5,30 C8,32 8,60 9,66 C6,70 8,96 12,99" fill="none" stroke="#9a9a9a" stroke-width="0.7"/><ellipse cx="12" cy="66" rx="4.3" ry="5.2" fill="none" stroke="#a0a0a0" stroke-width="0.8"/><ellipse cx="13" cy="66.5" rx="2.5" ry="3.4" fill="none" stroke="#a0a0a0" stroke-width="0.6"/><path d="M58,64 C62,66 63,72 60,76 C62,84 61,96 57,99" fill="none" stroke="#9a9a9a" stroke-width="0.7"/><path d="M12.7,19.4 L22,17.4 L22,103.5 L12.7,103.5 Z" fill="#e3e3e3"/><rect x="44" y="16" width="13.4" height="38" fill="#d9d9d9"/><rect x="35.4" y="18.7" width="8.6" height="35" fill="#3b3b3b"/><path d="M35.4,18.7 L44,21 L44,26 L35.4,25.4 Z" fill="#c9c9c9"/><path d="M22,17.4 L35.4,19.2 L35.4,103.5 L22,103.5 Z" fill="#0d3a9f"/><path d="M35.4,52.8 L58.1,54.2 L58.1,102.8 L35.4,103.5 Z" fill="#1f50bf"/><path d="M10,9.4 L22,5.6 L36.7,10 L57.4,13.4 L60.1,16 L60.1,23.4 L57.4,24.3 L44,21.4 L36,19.4 L22,17.4 L12.7,19.4 L10,18.7 Z" fill="#dcdcdc"/><path d="M22,5.6 L36.7,10 L36.7,19.6 L22,17.4 Z" fill="#bdbdbd"/><rect x="23.4" y="29.4" width="15.3" height="34.1" rx="2" fill="#707070"/><rect x="27.4" y="32" width="8.6" height="10" fill="#bdbdbd"/><rect x="28" y="44.7" width="7.4" height="16.7" fill="#cfcfcf"/><path d="M10.7,102.2 L60,101.5 L60,104.5 L10.7,105.5 Z" fill="#cdcdcd"/></g><g transform="translate(1109.8,410.9)"><path d="M12.5,30 C8,32 8,60 9,66 C6,70 8,96 12,99" fill="none" stroke="#9a9a9a" stroke-width="0.7"/><ellipse cx="12" cy="66" rx="4.3" ry="5.2" fill="none" stroke="#a0a0a0" stroke-width="0.8"/><ellipse cx="13" cy="66.5" rx="2.5" ry="3.4" fill="none" stroke="#a0a0a0" stroke-width="0.6"/><path d="M58,64 C62,66 63,72 60,76 C62,84 61,96 57,99" fill="none" stroke="#9a9a9a" stroke-width="0.7"/><path d="M12.7,19.4 L22,17.4 L22,103.5 L12.7,103.5 Z" fill="#e3e3e3"/><rect x="44" y="16" width="13.4" height="38" fill="#d9d9d9"/><rect x="35.4" y="18.7" width="8.6" height="35" fill="#3b3b3b"/><path d="M35.4,18.7 L44,21 L44,26 L35.4,25.4 Z" fill="#c9c9c9"/><path d="M22,17.4 L35.4,19.2 L35.4,103.5 L22,103.5 Z" fill="#0d3a9f"/><path d="M35.4,52.8 L58.1,54.2 L58.1,102.8 L35.4,103.5 Z" fill="#1f50bf"/><path d="M10,9.4 L22,5.6 L36.7,10 L57.4,13.4 L60.1,16 L60.1,23.4 L57.4,24.3 L44,21.4 L36,19.4 L22,17.4 L12.7,19.4 L10,18.7 Z" fill="#dcdcdc"/><path d="M22,5.6 L36.7,10 L36.7,19.6 L22,17.4 Z" fill="#bdbdbd"/><rect x="23.4" y="29.4" width="15.3" height="34.1" rx="2" fill="#707070"/><rect x="27.4" y="32" width="8.6" height="10" fill="#bdbdbd"/><rect x="28" y="44.7" width="7.4" height="16.7" fill="#cfcfcf"/><path d="M10.7,102.2 L60,101.5 L60,104.5 L10.7,105.5 Z" fill="#cdcdcd"/></g><g><line x1="655" y1="114.3" x2="655" y2="128" stroke="#8a8a8a" stroke-width="1.3"/><rect x="652.8" y="115.3" width="4.4" height="5.0" fill="#c8c8c8"/><path d="M650.5,110.3 L659.5,110.3 L657.8,115.8 L652.2,115.8 Z" fill="#3454c0"/><circle cx="655" cy="107.3" r="7.0" fill="#3a5ccc"/><circle cx="655" cy="107.3" r="4.8999999999999995" fill="url(#sensg)"/><rect x="651.15" y="106.3" width="7.700000000000001" height="2.2" fill="#ffffff" opacity="0.85"/></g><g><line x1="475.4" y1="215.6" x2="475.4" y2="229.5" stroke="#8a8a8a" stroke-width="1.3"/><rect x="473.2" y="216.6" width="4.4" height="5.0" fill="#c8c8c8"/><path d="M470.9,211.6 L479.9,211.6 L478.2,217.1 L472.59999999999997,217.1 Z" fill="#3454c0"/><circle cx="475.4" cy="208.6" r="7.0" fill="#3a5ccc"/><circle cx="475.4" cy="208.6" r="4.8999999999999995" fill="url(#sensg)"/><rect x="471.54999999999995" y="207.6" width="7.700000000000001" height="2.2" fill="#ffffff" opacity="0.85"/></g><g><line x1="516" y1="215.6" x2="516" y2="229.5" stroke="#8a8a8a" stroke-width="1.3"/><rect x="513.8" y="216.6" width="4.4" height="5.0" fill="#c8c8c8"/><path d="M511.5,211.6 L520.5,211.6 L518.8,217.1 L513.2,217.1 Z" fill="#3454c0"/><circle cx="516" cy="208.6" r="7.0" fill="#3a5ccc"/><circle cx="516" cy="208.6" r="4.8999999999999995" fill="url(#sensg)"/><rect x="512.15" y="207.6" width="7.700000000000001" height="2.2" fill="#ffffff" opacity="0.85"/></g><g><line x1="461.8" y1="274.9" x2="461.8" y2="286" stroke="#8a8a8a" stroke-width="1.3"/><rect x="459.93" y="275.75" width="3.74" height="4.25" fill="#c8c8c8"/><path d="M457.975,271.5 L465.625,271.5 L464.18,276.17499999999995 L459.42,276.17499999999995 Z" fill="#3454c0"/><circle cx="461.8" cy="268.95" r="5.95" fill="#3a5ccc"/><circle cx="461.8" cy="268.95" r="4.165" fill="url(#sensg)"/><rect x="458.52750000000003" y="268.09999999999997" width="6.545000000000001" height="1.87" fill="#ffffff" opacity="0.85"/></g><g><line x1="587.1" y1="361.3" x2="587.1" y2="374.7" stroke="#8a8a8a" stroke-width="1.3"/><rect x="584.9" y="362.3" width="4.4" height="5.0" fill="#c8c8c8"/><path d="M582.6,357.3 L591.6,357.3 L589.9,362.8 L584.3000000000001,362.8 Z" fill="#3454c0"/><circle cx="587.1" cy="354.3" r="7.0" fill="#3a5ccc"/><circle cx="587.1" cy="354.3" r="4.8999999999999995" fill="url(#sensg)"/><rect x="583.25" y="353.3" width="7.700000000000001" height="2.2" fill="#ffffff" opacity="0.85"/></g><g><line x1="404.6" y1="443.0" x2="404.6" y2="456.5" stroke="#8a8a8a" stroke-width="1.3"/><rect x="402.40000000000003" y="444.0" width="4.4" height="5.0" fill="#c8c8c8"/><path d="M400.1,439.0 L409.1,439.0 L407.40000000000003,444.5 L401.8,444.5 Z" fill="#3454c0"/><circle cx="404.6" cy="436.0" r="7.0" fill="#3a5ccc"/><circle cx="404.6" cy="436.0" r="4.8999999999999995" fill="url(#sensg)"/><rect x="400.75" y="435.0" width="7.700000000000001" height="2.2" fill="#ffffff" opacity="0.85"/></g><g><line x1="445" y1="443.0" x2="445" y2="456.5" stroke="#8a8a8a" stroke-width="1.3"/><rect x="442.8" y="444.0" width="4.4" height="5.0" fill="#c8c8c8"/><path d="M440.5,439.0 L449.5,439.0 L447.8,444.5 L442.2,444.5 Z" fill="#3454c0"/><circle cx="445" cy="436.0" r="7.0" fill="#3a5ccc"/><circle cx="445" cy="436.0" r="4.8999999999999995" fill="url(#sensg)"/><rect x="441.15" y="435.0" width="7.700000000000001" height="2.2" fill="#ffffff" opacity="0.85"/></g><g><line x1="389" y1="502.5" x2="389" y2="512.5" stroke="#8a8a8a" stroke-width="1.3"/><rect x="387.35" y="503.25" width="3.3000000000000003" height="3.75" fill="#c8c8c8"/><path d="M385.625,499.5 L392.375,499.5 L391.1,503.625 L386.9,503.625 Z" fill="#3454c0"/><circle cx="389" cy="497.25" r="5.25" fill="#3a5ccc"/><circle cx="389" cy="497.25" r="3.675" fill="url(#sensg)"/><rect x="386.1125" y="496.5" width="5.775" height="1.6500000000000001" fill="#ffffff" opacity="0.85"/></g><line x1="1110" y1="624.2" x2="1252" y2="624.2" stroke="#4fc21c" stroke-width="2.2"/><rect x="1113.7" y="608.2" width="5.6" height="12.5" fill="#dcc391"/><rect x="1091" y="632" width="7.4" height="12.4" fill="#dcc391"/><circle cx="1094.2" cy="613.7" r="19.3" fill="#0a0a0a"/><circle cx="1094.2" cy="613.7" r="18" fill="url(#pgG)"/><line x1="1084.4" y1="623.5" x2="1098" y2="611.5" stroke="#1a1a1a" stroke-width="0.9"/><path d="M1100.5,609.3 L1096,612 L1097.8,614.2 Z" fill="#111"/><rect x="1091.4" y="625.6" width="6.3" height="3.4" fill="#222"/><path d="M391.63,741.37 A38.0,38.0 0 0 1 387.76,692.16" fill="none" stroke="#5ad3dc" stroke-width="7"/><path d="M387.76,692.16 A38.0,38.0 0 0 1 449.24,692.16" fill="none" stroke="#22ee2c" stroke-width="7"/><path d="M449.24,692.16 A38.0,38.0 0 0 1 445.37,741.37" fill="none" stroke="#f45c62" stroke-width="7"/><line x1="389.16" y1="743.84" x2="394.81" y2="738.19" stroke="#fff" stroke-width="1.7"/><line x1="387.68" y1="740.00" x2="390.76" y2="737.45" stroke="#fff" stroke-width="1.1"/><line x1="385.42" y1="736.98" x2="388.73" y2="734.74" stroke="#fff" stroke-width="1.1"/><line x1="383.45" y1="733.77" x2="386.95" y2="731.84" stroke="#fff" stroke-width="1.1"/><line x1="381.79" y1="730.39" x2="385.46" y2="728.80" stroke="#fff" stroke-width="1.1"/><line x1="379.03" y1="727.32" x2="386.64" y2="724.85" stroke="#fff" stroke-width="1.7"/><line x1="379.46" y1="723.23" x2="383.37" y2="722.35" stroke="#fff" stroke-width="1.1"/><line x1="378.82" y1="719.51" x2="382.78" y2="719.01" stroke="#fff" stroke-width="1.1"/><line x1="378.52" y1="715.76" x2="382.52" y2="715.63" stroke="#fff" stroke-width="1.1"/><line x1="378.58" y1="711.99" x2="382.57" y2="712.24" stroke="#fff" stroke-width="1.1"/><line x1="377.51" y1="708.01" x2="385.41" y2="709.26" stroke="#fff" stroke-width="1.7"/><line x1="379.76" y1="704.55" x2="383.63" y2="705.55" stroke="#fff" stroke-width="1.1"/><line x1="380.86" y1="700.95" x2="384.63" y2="702.31" stroke="#fff" stroke-width="1.1"/><line x1="382.31" y1="697.47" x2="385.93" y2="699.17" stroke="#fff" stroke-width="1.1"/><line x1="384.07" y1="694.14" x2="387.51" y2="696.17" stroke="#fff" stroke-width="1.1"/><line x1="384.93" y1="690.11" x2="391.40" y2="694.81" stroke="#fff" stroke-width="1.7"/><line x1="388.50" y1="688.05" x2="391.50" y2="690.69" stroke="#fff" stroke-width="1.1"/><line x1="391.12" y1="685.34" x2="393.86" y2="688.26" stroke="#fff" stroke-width="1.1"/><line x1="393.98" y1="682.89" x2="396.44" y2="686.05" stroke="#fff" stroke-width="1.1"/><line x1="397.07" y1="680.73" x2="399.21" y2="684.10" stroke="#fff" stroke-width="1.1"/><line x1="399.66" y1="677.52" x2="403.29" y2="684.65" stroke="#fff" stroke-width="1.7"/><line x1="403.78" y1="677.31" x2="405.25" y2="681.03" stroke="#fff" stroke-width="1.1"/><line x1="407.34" y1="676.09" x2="408.46" y2="679.93" stroke="#fff" stroke-width="1.1"/><line x1="411.00" y1="675.21" x2="411.75" y2="679.14" stroke="#fff" stroke-width="1.1"/><line x1="414.74" y1="674.68" x2="415.11" y2="678.66" stroke="#fff" stroke-width="1.1"/><line x1="418.50" y1="673.00" x2="418.50" y2="681.00" stroke="#fff" stroke-width="1.7"/><line x1="422.26" y1="674.68" x2="421.89" y2="678.66" stroke="#fff" stroke-width="1.1"/><line x1="426.00" y1="675.21" x2="425.25" y2="679.14" stroke="#fff" stroke-width="1.1"/><line x1="429.66" y1="676.09" x2="428.54" y2="679.93" stroke="#fff" stroke-width="1.1"/><line x1="433.22" y1="677.31" x2="431.75" y2="681.03" stroke="#fff" stroke-width="1.1"/><line x1="437.34" y1="677.52" x2="433.71" y2="684.65" stroke="#fff" stroke-width="1.7"/><line x1="439.93" y1="680.73" x2="437.79" y2="684.10" stroke="#fff" stroke-width="1.1"/><line x1="443.02" y1="682.89" x2="440.56" y2="686.05" stroke="#fff" stroke-width="1.1"/><line x1="445.88" y1="685.34" x2="443.14" y2="688.26" stroke="#fff" stroke-width="1.1"/><line x1="448.50" y1="688.05" x2="445.50" y2="690.69" stroke="#fff" stroke-width="1.1"/><line x1="452.07" y1="690.11" x2="445.60" y2="694.81" stroke="#fff" stroke-width="1.7"/><line x1="452.93" y1="694.14" x2="449.49" y2="696.17" stroke="#fff" stroke-width="1.1"/><line x1="454.69" y1="697.47" x2="451.07" y2="699.17" stroke="#fff" stroke-width="1.1"/><line x1="456.14" y1="700.95" x2="452.37" y2="702.31" stroke="#fff" stroke-width="1.1"/><line x1="457.24" y1="704.55" x2="453.37" y2="705.55" stroke="#fff" stroke-width="1.1"/><line x1="459.49" y1="708.01" x2="451.59" y2="709.26" stroke="#fff" stroke-width="1.7"/><line x1="458.42" y1="711.99" x2="454.43" y2="712.24" stroke="#fff" stroke-width="1.1"/><line x1="458.48" y1="715.76" x2="454.48" y2="715.63" stroke="#fff" stroke-width="1.1"/><line x1="458.18" y1="719.51" x2="454.22" y2="719.01" stroke="#fff" stroke-width="1.1"/><line x1="457.54" y1="723.23" x2="453.63" y2="722.35" stroke="#fff" stroke-width="1.1"/><line x1="457.97" y1="727.32" x2="450.36" y2="724.85" stroke="#fff" stroke-width="1.7"/><line x1="455.21" y1="730.39" x2="451.54" y2="728.80" stroke="#fff" stroke-width="1.1"/><line x1="453.55" y1="733.77" x2="450.05" y2="731.84" stroke="#fff" stroke-width="1.1"/><line x1="451.58" y1="736.98" x2="448.27" y2="734.74" stroke="#fff" stroke-width="1.1"/><line x1="449.32" y1="740.00" x2="446.24" y2="737.45" stroke="#fff" stroke-width="1.1"/><line x1="447.84" y1="743.84" x2="442.19" y2="738.19" stroke="#fff" stroke-width="1.7"/><text x="396.58" y="738.72" text-anchor="start" font-family="Liberation Sans" font-size="11" fill="#5ad3dc" stroke="#5ad3dc" stroke-width="0.2">0</text><text x="389.02" y="726.38" text-anchor="start" font-family="Liberation Sans" font-size="11" fill="#5ad3dc" stroke="#5ad3dc" stroke-width="0.2">0.2</text><text x="387.88" y="711.95" text-anchor="start" font-family="Liberation Sans" font-size="11" fill="#5ad3dc" stroke="#5ad3dc" stroke-width="0.2">0.4</text><text x="393.42" y="698.58" text-anchor="start" font-family="Liberation Sans" font-size="11" fill="#5ad3dc" stroke="#5ad3dc" stroke-width="0.2">0.6</text><text x="404.43" y="695.38" text-anchor="start" font-family="Liberation Sans" font-size="11" fill="#25e63a" stroke="#25e63a" stroke-width="0.2">0.8</text><text x="418.50" y="692.00" text-anchor="middle" font-family="Liberation Sans" font-size="11" fill="#25e63a" stroke="#25e63a" stroke-width="0.2">1</text><text x="432.57" y="695.38" text-anchor="end" font-family="Liberation Sans" font-size="11" fill="#25e63a" stroke="#25e63a" stroke-width="0.2">1.2</text><text x="443.58" y="698.58" text-anchor="end" font-family="Liberation Sans" font-size="11" fill="#25e63a" stroke="#25e63a" stroke-width="0.2">1.4</text><text x="449.12" y="711.95" text-anchor="end" font-family="Liberation Sans" font-size="11" fill="#f45c62" stroke="#f45c62" stroke-width="0.2">1.6</text><text x="447.98" y="726.38" text-anchor="end" font-family="Liberation Sans" font-size="11" fill="#f45c62" stroke="#f45c62" stroke-width="0.2">1.8</text><text x="440.42" y="738.72" text-anchor="end" font-family="Liberation Sans" font-size="11" fill="#f45c62" stroke="#f45c62" stroke-width="0.2">2</text><polygon points="401.50,730.50 416.90,710.90 425.30,707.90 421.70,716.30" fill="#5ad3dc"/><path d="M497.63,741.37 A38.0,38.0 0 0 1 493.76,692.16" fill="none" stroke="#5ad3dc" stroke-width="7"/><path d="M493.76,692.16 A38.0,38.0 0 0 1 555.24,692.16" fill="none" stroke="#22ee2c" stroke-width="7"/><path d="M555.24,692.16 A38.0,38.0 0 0 1 551.37,741.37" fill="none" stroke="#f45c62" stroke-width="7"/><line x1="495.16" y1="743.84" x2="500.81" y2="738.19" stroke="#fff" stroke-width="1.7"/><line x1="493.68" y1="740.00" x2="496.76" y2="737.45" stroke="#fff" stroke-width="1.1"/><line x1="491.42" y1="736.98" x2="494.73" y2="734.74" stroke="#fff" stroke-width="1.1"/><line x1="489.45" y1="733.77" x2="492.95" y2="731.84" stroke="#fff" stroke-width="1.1"/><line x1="487.79" y1="730.39" x2="491.46" y2="728.80" stroke="#fff" stroke-width="1.1"/><line x1="485.03" y1="727.32" x2="492.64" y2="724.85" stroke="#fff" stroke-width="1.7"/><line x1="485.46" y1="723.23" x2="489.37" y2="722.35" stroke="#fff" stroke-width="1.1"/><line x1="484.82" y1="719.51" x2="488.78" y2="719.01" stroke="#fff" stroke-width="1.1"/><line x1="484.52" y1="715.76" x2="488.52" y2="715.63" stroke="#fff" stroke-width="1.1"/><line x1="484.58" y1="711.99" x2="488.57" y2="712.24" stroke="#fff" stroke-width="1.1"/><line x1="483.51" y1="708.01" x2="491.41" y2="709.26" stroke="#fff" stroke-width="1.7"/><line x1="485.76" y1="704.55" x2="489.63" y2="705.55" stroke="#fff" stroke-width="1.1"/><line x1="486.86" y1="700.95" x2="490.63" y2="702.31" stroke="#fff" stroke-width="1.1"/><line x1="488.31" y1="697.47" x2="491.93" y2="699.17" stroke="#fff" stroke-width="1.1"/><line x1="490.07" y1="694.14" x2="493.51" y2="696.17" stroke="#fff" stroke-width="1.1"/><line x1="490.93" y1="690.11" x2="497.40" y2="694.81" stroke="#fff" stroke-width="1.7"/><line x1="494.50" y1="688.05" x2="497.50" y2="690.69" stroke="#fff" stroke-width="1.1"/><line x1="497.12" y1="685.34" x2="499.86" y2="688.26" stroke="#fff" stroke-width="1.1"/><line x1="499.98" y1="682.89" x2="502.44" y2="686.05" stroke="#fff" stroke-width="1.1"/><line x1="503.07" y1="680.73" x2="505.21" y2="684.10" stroke="#fff" stroke-width="1.1"/><line x1="505.66" y1="677.52" x2="509.29" y2="684.65" stroke="#fff" stroke-width="1.7"/><line x1="509.78" y1="677.31" x2="511.25" y2="681.03" stroke="#fff" stroke-width="1.1"/><line x1="513.34" y1="676.09" x2="514.46" y2="679.93" stroke="#fff" stroke-width="1.1"/><line x1="517.00" y1="675.21" x2="517.75" y2="679.14" stroke="#fff" stroke-width="1.1"/><line x1="520.74" y1="674.68" x2="521.11" y2="678.66" stroke="#fff" stroke-width="1.1"/><line x1="524.50" y1="673.00" x2="524.50" y2="681.00" stroke="#fff" stroke-width="1.7"/><line x1="528.26" y1="674.68" x2="527.89" y2="678.66" stroke="#fff" stroke-width="1.1"/><line x1="532.00" y1="675.21" x2="531.25" y2="679.14" stroke="#fff" stroke-width="1.1"/><line x1="535.66" y1="676.09" x2="534.54" y2="679.93" stroke="#fff" stroke-width="1.1"/><line x1="539.22" y1="677.31" x2="537.75" y2="681.03" stroke="#fff" stroke-width="1.1"/><line x1="543.34" y1="677.52" x2="539.71" y2="684.65" stroke="#fff" stroke-width="1.7"/><line x1="545.93" y1="680.73" x2="543.79" y2="684.10" stroke="#fff" stroke-width="1.1"/><line x1="549.02" y1="682.89" x2="546.56" y2="686.05" stroke="#fff" stroke-width="1.1"/><line x1="551.88" y1="685.34" x2="549.14" y2="688.26" stroke="#fff" stroke-width="1.1"/><line x1="554.50" y1="688.05" x2="551.50" y2="690.69" stroke="#fff" stroke-width="1.1"/><line x1="558.07" y1="690.11" x2="551.60" y2="694.81" stroke="#fff" stroke-width="1.7"/><line x1="558.93" y1="694.14" x2="555.49" y2="696.17" stroke="#fff" stroke-width="1.1"/><line x1="560.69" y1="697.47" x2="557.07" y2="699.17" stroke="#fff" stroke-width="1.1"/><line x1="562.14" y1="700.95" x2="558.37" y2="702.31" stroke="#fff" stroke-width="1.1"/><line x1="563.24" y1="704.55" x2="559.37" y2="705.55" stroke="#fff" stroke-width="1.1"/><line x1="565.49" y1="708.01" x2="557.59" y2="709.26" stroke="#fff" stroke-width="1.7"/><line x1="564.42" y1="711.99" x2="560.43" y2="712.24" stroke="#fff" stroke-width="1.1"/><line x1="564.48" y1="715.76" x2="560.48" y2="715.63" stroke="#fff" stroke-width="1.1"/><line x1="564.18" y1="719.51" x2="560.22" y2="719.01" stroke="#fff" stroke-width="1.1"/><line x1="563.54" y1="723.23" x2="559.63" y2="722.35" stroke="#fff" stroke-width="1.1"/><line x1="563.97" y1="727.32" x2="556.36" y2="724.85" stroke="#fff" stroke-width="1.7"/><line x1="561.21" y1="730.39" x2="557.54" y2="728.80" stroke="#fff" stroke-width="1.1"/><line x1="559.55" y1="733.77" x2="556.05" y2="731.84" stroke="#fff" stroke-width="1.1"/><line x1="557.58" y1="736.98" x2="554.27" y2="734.74" stroke="#fff" stroke-width="1.1"/><line x1="555.32" y1="740.00" x2="552.24" y2="737.45" stroke="#fff" stroke-width="1.1"/><line x1="553.84" y1="743.84" x2="548.19" y2="738.19" stroke="#fff" stroke-width="1.7"/><text x="502.58" y="738.72" text-anchor="start" font-family="Liberation Sans" font-size="11" fill="#5ad3dc" stroke="#5ad3dc" stroke-width="0.2">0</text><text x="495.02" y="726.38" text-anchor="start" font-family="Liberation Sans" font-size="11" fill="#5ad3dc" stroke="#5ad3dc" stroke-width="0.2">0.2</text><text x="493.88" y="711.95" text-anchor="start" font-family="Liberation Sans" font-size="11" fill="#5ad3dc" stroke="#5ad3dc" stroke-width="0.2">0.4</text><text x="499.42" y="698.58" text-anchor="start" font-family="Liberation Sans" font-size="11" fill="#5ad3dc" stroke="#5ad3dc" stroke-width="0.2">0.6</text><text x="510.43" y="695.38" text-anchor="start" font-family="Liberation Sans" font-size="11" fill="#25e63a" stroke="#25e63a" stroke-width="0.2">0.8</text><text x="524.50" y="692.00" text-anchor="middle" font-family="Liberation Sans" font-size="11" fill="#25e63a" stroke="#25e63a" stroke-width="0.2">1</text><text x="538.57" y="695.38" text-anchor="end" font-family="Liberation Sans" font-size="11" fill="#25e63a" stroke="#25e63a" stroke-width="0.2">1.2</text><text x="549.58" y="698.58" text-anchor="end" font-family="Liberation Sans" font-size="11" fill="#25e63a" stroke="#25e63a" stroke-width="0.2">1.4</text><text x="555.12" y="711.95" text-anchor="end" font-family="Liberation Sans" font-size="11" fill="#f45c62" stroke="#f45c62" stroke-width="0.2">1.6</text><text x="553.98" y="726.38" text-anchor="end" font-family="Liberation Sans" font-size="11" fill="#f45c62" stroke="#f45c62" stroke-width="0.2">1.8</text><text x="546.42" y="738.72" text-anchor="end" font-family="Liberation Sans" font-size="11" fill="#f45c62" stroke="#f45c62" stroke-width="0.2">2</text><polygon points="507.50,730.50 522.90,710.90 531.30,707.90 527.70,716.30" fill="#5ad3dc"/><path d="M599.13,741.37 A38.0,38.0 0 0 1 595.26,692.16" fill="none" stroke="#5ad3dc" stroke-width="7"/><path d="M595.26,692.16 A38.0,38.0 0 0 1 656.74,692.16" fill="none" stroke="#22ee2c" stroke-width="7"/><path d="M656.74,692.16 A38.0,38.0 0 0 1 652.87,741.37" fill="none" stroke="#f45c62" stroke-width="7"/><line x1="596.66" y1="743.84" x2="602.31" y2="738.19" stroke="#fff" stroke-width="1.7"/><line x1="595.18" y1="740.00" x2="598.26" y2="737.45" stroke="#fff" stroke-width="1.1"/><line x1="592.92" y1="736.98" x2="596.23" y2="734.74" stroke="#fff" stroke-width="1.1"/><line x1="590.95" y1="733.77" x2="594.45" y2="731.84" stroke="#fff" stroke-width="1.1"/><line x1="589.29" y1="730.39" x2="592.96" y2="728.80" stroke="#fff" stroke-width="1.1"/><line x1="586.53" y1="727.32" x2="594.14" y2="724.85" stroke="#fff" stroke-width="1.7"/><line x1="586.96" y1="723.23" x2="590.87" y2="722.35" stroke="#fff" stroke-width="1.1"/><line x1="586.32" y1="719.51" x2="590.28" y2="719.01" stroke="#fff" stroke-width="1.1"/><line x1="586.02" y1="715.76" x2="590.02" y2="715.63" stroke="#fff" stroke-width="1.1"/><line x1="586.08" y1="711.99" x2="590.07" y2="712.24" stroke="#fff" stroke-width="1.1"/><line x1="585.01" y1="708.01" x2="592.91" y2="709.26" stroke="#fff" stroke-width="1.7"/><line x1="587.26" y1="704.55" x2="591.13" y2="705.55" stroke="#fff" stroke-width="1.1"/><line x1="588.36" y1="700.95" x2="592.13" y2="702.31" stroke="#fff" stroke-width="1.1"/><line x1="589.81" y1="697.47" x2="593.43" y2="699.17" stroke="#fff" stroke-width="1.1"/><line x1="591.57" y1="694.14" x2="595.01" y2="696.17" stroke="#fff" stroke-width="1.1"/><line x1="592.43" y1="690.11" x2="598.90" y2="694.81" stroke="#fff" stroke-width="1.7"/><line x1="596.00" y1="688.05" x2="599.00" y2="690.69" stroke="#fff" stroke-width="1.1"/><line x1="598.62" y1="685.34" x2="601.36" y2="688.26" stroke="#fff" stroke-width="1.1"/><line x1="601.48" y1="682.89" x2="603.94" y2="686.05" stroke="#fff" stroke-width="1.1"/><line x1="604.57" y1="680.73" x2="606.71" y2="684.10" stroke="#fff" stroke-width="1.1"/><line x1="607.16" y1="677.52" x2="610.79" y2="684.65" stroke="#fff" stroke-width="1.7"/><line x1="611.28" y1="677.31" x2="612.75" y2="681.03" stroke="#fff" stroke-width="1.1"/><line x1="614.84" y1="676.09" x2="615.96" y2="679.93" stroke="#fff" stroke-width="1.1"/><line x1="618.50" y1="675.21" x2="619.25" y2="679.14" stroke="#fff" stroke-width="1.1"/><line x1="622.24" y1="674.68" x2="622.61" y2="678.66" stroke="#fff" stroke-width="1.1"/><line x1="626.00" y1="673.00" x2="626.00" y2="681.00" stroke="#fff" stroke-width="1.7"/><line x1="629.76" y1="674.68" x2="629.39" y2="678.66" stroke="#fff" stroke-width="1.1"/><line x1="633.50" y1="675.21" x2="632.75" y2="679.14" stroke="#fff" stroke-width="1.1"/><line x1="637.16" y1="676.09" x2="636.04" y2="679.93" stroke="#fff" stroke-width="1.1"/><line x1="640.72" y1="677.31" x2="639.25" y2="681.03" stroke="#fff" stroke-width="1.1"/><line x1="644.84" y1="677.52" x2="641.21" y2="684.65" stroke="#fff" stroke-width="1.7"/><line x1="647.43" y1="680.73" x2="645.29" y2="684.10" stroke="#fff" stroke-width="1.1"/><line x1="650.52" y1="682.89" x2="648.06" y2="686.05" stroke="#fff" stroke-width="1.1"/><line x1="653.38" y1="685.34" x2="650.64" y2="688.26" stroke="#fff" stroke-width="1.1"/><line x1="656.00" y1="688.05" x2="653.00" y2="690.69" stroke="#fff" stroke-width="1.1"/><line x1="659.57" y1="690.11" x2="653.10" y2="694.81" stroke="#fff" stroke-width="1.7"/><line x1="660.43" y1="694.14" x2="656.99" y2="696.17" stroke="#fff" stroke-width="1.1"/><line x1="662.19" y1="697.47" x2="658.57" y2="699.17" stroke="#fff" stroke-width="1.1"/><line x1="663.64" y1="700.95" x2="659.87" y2="702.31" stroke="#fff" stroke-width="1.1"/><line x1="664.74" y1="704.55" x2="660.87" y2="705.55" stroke="#fff" stroke-width="1.1"/><line x1="666.99" y1="708.01" x2="659.09" y2="709.26" stroke="#fff" stroke-width="1.7"/><line x1="665.92" y1="711.99" x2="661.93" y2="712.24" stroke="#fff" stroke-width="1.1"/><line x1="665.98" y1="715.76" x2="661.98" y2="715.63" stroke="#fff" stroke-width="1.1"/><line x1="665.68" y1="719.51" x2="661.72" y2="719.01" stroke="#fff" stroke-width="1.1"/><line x1="665.04" y1="723.23" x2="661.13" y2="722.35" stroke="#fff" stroke-width="1.1"/><line x1="665.47" y1="727.32" x2="657.86" y2="724.85" stroke="#fff" stroke-width="1.7"/><line x1="662.71" y1="730.39" x2="659.04" y2="728.80" stroke="#fff" stroke-width="1.1"/><line x1="661.05" y1="733.77" x2="657.55" y2="731.84" stroke="#fff" stroke-width="1.1"/><line x1="659.08" y1="736.98" x2="655.77" y2="734.74" stroke="#fff" stroke-width="1.1"/><line x1="656.82" y1="740.00" x2="653.74" y2="737.45" stroke="#fff" stroke-width="1.1"/><line x1="655.34" y1="743.84" x2="649.69" y2="738.19" stroke="#fff" stroke-width="1.7"/><text x="604.08" y="738.72" text-anchor="start" font-family="Liberation Sans" font-size="11" fill="#5ad3dc" stroke="#5ad3dc" stroke-width="0.2">0</text><text x="596.52" y="726.38" text-anchor="start" font-family="Liberation Sans" font-size="11" fill="#5ad3dc" stroke="#5ad3dc" stroke-width="0.2">0.2</text><text x="595.38" y="711.95" text-anchor="start" font-family="Liberation Sans" font-size="11" fill="#5ad3dc" stroke="#5ad3dc" stroke-width="0.2">0.4</text><text x="600.92" y="698.58" text-anchor="start" font-family="Liberation Sans" font-size="11" fill="#5ad3dc" stroke="#5ad3dc" stroke-width="0.2">0.6</text><text x="611.93" y="695.38" text-anchor="start" font-family="Liberation Sans" font-size="11" fill="#25e63a" stroke="#25e63a" stroke-width="0.2">0.8</text><text x="626.00" y="692.00" text-anchor="middle" font-family="Liberation Sans" font-size="11" fill="#25e63a" stroke="#25e63a" stroke-width="0.2">1</text><text x="640.07" y="695.38" text-anchor="end" font-family="Liberation Sans" font-size="11" fill="#25e63a" stroke="#25e63a" stroke-width="0.2">1.2</text><text x="651.08" y="698.58" text-anchor="end" font-family="Liberation Sans" font-size="11" fill="#25e63a" stroke="#25e63a" stroke-width="0.2">1.4</text><text x="656.62" y="711.95" text-anchor="end" font-family="Liberation Sans" font-size="11" fill="#f45c62" stroke="#f45c62" stroke-width="0.2">1.6</text><text x="655.48" y="726.38" text-anchor="end" font-family="Liberation Sans" font-size="11" fill="#f45c62" stroke="#f45c62" stroke-width="0.2">1.8</text><text x="647.92" y="738.72" text-anchor="end" font-family="Liberation Sans" font-size="11" fill="#f45c62" stroke="#f45c62" stroke-width="0.2">2</text><polygon points="609.00,730.50 624.40,710.90 632.80,707.90 629.20,716.30" fill="#5ad3dc"/><path d="M696.53,741.37 A38.0,38.0 0 0 1 692.66,692.16" fill="none" stroke="#5ad3dc" stroke-width="7"/><path d="M692.66,692.16 A38.0,38.0 0 0 1 754.14,692.16" fill="none" stroke="#22ee2c" stroke-width="7"/><path d="M754.14,692.16 A38.0,38.0 0 0 1 750.27,741.37" fill="none" stroke="#f45c62" stroke-width="7"/><line x1="694.06" y1="743.84" x2="699.71" y2="738.19" stroke="#fff" stroke-width="1.7"/><line x1="692.58" y1="740.00" x2="695.66" y2="737.45" stroke="#fff" stroke-width="1.1"/><line x1="690.32" y1="736.98" x2="693.63" y2="734.74" stroke="#fff" stroke-width="1.1"/><line x1="688.35" y1="733.77" x2="691.85" y2="731.84" stroke="#fff" stroke-width="1.1"/><line x1="686.69" y1="730.39" x2="690.36" y2="728.80" stroke="#fff" stroke-width="1.1"/><line x1="683.93" y1="727.32" x2="691.54" y2="724.85" stroke="#fff" stroke-width="1.7"/><line x1="684.36" y1="723.23" x2="688.27" y2="722.35" stroke="#fff" stroke-width="1.1"/><line x1="683.72" y1="719.51" x2="687.68" y2="719.01" stroke="#fff" stroke-width="1.1"/><line x1="683.42" y1="715.76" x2="687.42" y2="715.63" stroke="#fff" stroke-width="1.1"/><line x1="683.48" y1="711.99" x2="687.47" y2="712.24" stroke="#fff" stroke-width="1.1"/><line x1="682.41" y1="708.01" x2="690.31" y2="709.26" stroke="#fff" stroke-width="1.7"/><line x1="684.66" y1="704.55" x2="688.53" y2="705.55" stroke="#fff" stroke-width="1.1"/><line x1="685.76" y1="700.95" x2="689.53" y2="702.31" stroke="#fff" stroke-width="1.1"/><line x1="687.21" y1="697.47" x2="690.83" y2="699.17" stroke="#fff" stroke-width="1.1"/><line x1="688.97" y1="694.14" x2="692.41" y2="696.17" stroke="#fff" stroke-width="1.1"/><line x1="689.83" y1="690.11" x2="696.30" y2="694.81" stroke="#fff" stroke-width="1.7"/><line x1="693.40" y1="688.05" x2="696.40" y2="690.69" stroke="#fff" stroke-width="1.1"/><line x1="696.02" y1="685.34" x2="698.76" y2="688.26" stroke="#fff" stroke-width="1.1"/><line x1="698.88" y1="682.89" x2="701.34" y2="686.05" stroke="#fff" stroke-width="1.1"/><line x1="701.97" y1="680.73" x2="704.11" y2="684.10" stroke="#fff" stroke-width="1.1"/><line x1="704.56" y1="677.52" x2="708.19" y2="684.65" stroke="#fff" stroke-width="1.7"/><line x1="708.68" y1="677.31" x2="710.15" y2="681.03" stroke="#fff" stroke-width="1.1"/><line x1="712.24" y1="676.09" x2="713.36" y2="679.93" stroke="#fff" stroke-width="1.1"/><line x1="715.90" y1="675.21" x2="716.65" y2="679.14" stroke="#fff" stroke-width="1.1"/><line x1="719.64" y1="674.68" x2="720.01" y2="678.66" stroke="#fff" stroke-width="1.1"/><line x1="723.40" y1="673.00" x2="723.40" y2="681.00" stroke="#fff" stroke-width="1.7"/><line x1="727.16" y1="674.68" x2="726.79" y2="678.66" stroke="#fff" stroke-width="1.1"/><line x1="730.90" y1="675.21" x2="730.15" y2="679.14" stroke="#fff" stroke-width="1.1"/><line x1="734.56" y1="676.09" x2="733.44" y2="679.93" stroke="#fff" stroke-width="1.1"/><line x1="738.12" y1="677.31" x2="736.65" y2="681.03" stroke="#fff" stroke-width="1.1"/><line x1="742.24" y1="677.52" x2="738.61" y2="684.65" stroke="#fff" stroke-width="1.7"/><line x1="744.83" y1="680.73" x2="742.69" y2="684.10" stroke="#fff" stroke-width="1.1"/><line x1="747.92" y1="682.89" x2="745.46" y2="686.05" stroke="#fff" stroke-width="1.1"/><line x1="750.78" y1="685.34" x2="748.04" y2="688.26" stroke="#fff" stroke-width="1.1"/><line x1="753.40" y1="688.05" x2="750.40" y2="690.69" stroke="#fff" stroke-width="1.1"/><line x1="756.97" y1="690.11" x2="750.50" y2="694.81" stroke="#fff" stroke-width="1.7"/><line x1="757.83" y1="694.14" x2="754.39" y2="696.17" stroke="#fff" stroke-width="1.1"/><line x1="759.59" y1="697.47" x2="755.97" y2="699.17" stroke="#fff" stroke-width="1.1"/><line x1="761.04" y1="700.95" x2="757.27" y2="702.31" stroke="#fff" stroke-width="1.1"/><line x1="762.14" y1="704.55" x2="758.27" y2="705.55" stroke="#fff" stroke-width="1.1"/><line x1="764.39" y1="708.01" x2="756.49" y2="709.26" stroke="#fff" stroke-width="1.7"/><line x1="763.32" y1="711.99" x2="759.33" y2="712.24" stroke="#fff" stroke-width="1.1"/><line x1="763.38" y1="715.76" x2="759.38" y2="715.63" stroke="#fff" stroke-width="1.1"/><line x1="763.08" y1="719.51" x2="759.12" y2="719.01" stroke="#fff" stroke-width="1.1"/><line x1="762.44" y1="723.23" x2="758.53" y2="722.35" stroke="#fff" stroke-width="1.1"/><line x1="762.87" y1="727.32" x2="755.26" y2="724.85" stroke="#fff" stroke-width="1.7"/><line x1="760.11" y1="730.39" x2="756.44" y2="728.80" stroke="#fff" stroke-width="1.1"/><line x1="758.45" y1="733.77" x2="754.95" y2="731.84" stroke="#fff" stroke-width="1.1"/><line x1="756.48" y1="736.98" x2="753.17" y2="734.74" stroke="#fff" stroke-width="1.1"/><line x1="754.22" y1="740.00" x2="751.14" y2="737.45" stroke="#fff" stroke-width="1.1"/><line x1="752.74" y1="743.84" x2="747.09" y2="738.19" stroke="#fff" stroke-width="1.7"/><text x="701.48" y="738.72" text-anchor="start" font-family="Liberation Sans" font-size="11" fill="#5ad3dc" stroke="#5ad3dc" stroke-width="0.2">0</text><text x="693.92" y="726.38" text-anchor="start" font-family="Liberation Sans" font-size="11" fill="#5ad3dc" stroke="#5ad3dc" stroke-width="0.2">0.2</text><text x="692.78" y="711.95" text-anchor="start" font-family="Liberation Sans" font-size="11" fill="#5ad3dc" stroke="#5ad3dc" stroke-width="0.2">0.4</text><text x="698.32" y="698.58" text-anchor="start" font-family="Liberation Sans" font-size="11" fill="#5ad3dc" stroke="#5ad3dc" stroke-width="0.2">0.6</text><text x="709.33" y="695.38" text-anchor="start" font-family="Liberation Sans" font-size="11" fill="#25e63a" stroke="#25e63a" stroke-width="0.2">0.8</text><text x="723.40" y="692.00" text-anchor="middle" font-family="Liberation Sans" font-size="11" fill="#25e63a" stroke="#25e63a" stroke-width="0.2">1</text><text x="737.47" y="695.38" text-anchor="end" font-family="Liberation Sans" font-size="11" fill="#25e63a" stroke="#25e63a" stroke-width="0.2">1.2</text><text x="748.48" y="698.58" text-anchor="end" font-family="Liberation Sans" font-size="11" fill="#25e63a" stroke="#25e63a" stroke-width="0.2">1.4</text><text x="754.02" y="711.95" text-anchor="end" font-family="Liberation Sans" font-size="11" fill="#f45c62" stroke="#f45c62" stroke-width="0.2">1.6</text><text x="752.88" y="726.38" text-anchor="end" font-family="Liberation Sans" font-size="11" fill="#f45c62" stroke="#f45c62" stroke-width="0.2">1.8</text><text x="745.32" y="738.72" text-anchor="end" font-family="Liberation Sans" font-size="11" fill="#f45c62" stroke="#f45c62" stroke-width="0.2">2</text><polygon points="706.40,730.50 721.80,710.90 730.20,707.90 726.60,716.30" fill="#5ad3dc"/><path d="M797.73,741.37 A38.0,38.0 0 0 1 793.86,692.16" fill="none" stroke="#5ad3dc" stroke-width="7"/><path d="M793.86,692.16 A38.0,38.0 0 0 1 855.34,692.16" fill="none" stroke="#22ee2c" stroke-width="7"/><path d="M855.34,692.16 A38.0,38.0 0 0 1 851.47,741.37" fill="none" stroke="#f45c62" stroke-width="7"/><line x1="795.26" y1="743.84" x2="800.91" y2="738.19" stroke="#fff" stroke-width="1.7"/><line x1="793.78" y1="740.00" x2="796.86" y2="737.45" stroke="#fff" stroke-width="1.1"/><line x1="791.52" y1="736.98" x2="794.83" y2="734.74" stroke="#fff" stroke-width="1.1"/><line x1="789.55" y1="733.77" x2="793.05" y2="731.84" stroke="#fff" stroke-width="1.1"/><line x1="787.89" y1="730.39" x2="791.56" y2="728.80" stroke="#fff" stroke-width="1.1"/><line x1="785.13" y1="727.32" x2="792.74" y2="724.85" stroke="#fff" stroke-width="1.7"/><line x1="785.56" y1="723.23" x2="789.47" y2="722.35" stroke="#fff" stroke-width="1.1"/><line x1="784.92" y1="719.51" x2="788.88" y2="719.01" stroke="#fff" stroke-width="1.1"/><line x1="784.62" y1="715.76" x2="788.62" y2="715.63" stroke="#fff" stroke-width="1.1"/><line x1="784.68" y1="711.99" x2="788.67" y2="712.24" stroke="#fff" stroke-width="1.1"/><line x1="783.61" y1="708.01" x2="791.51" y2="709.26" stroke="#fff" stroke-width="1.7"/><line x1="785.86" y1="704.55" x2="789.73" y2="705.55" stroke="#fff" stroke-width="1.1"/><line x1="786.96" y1="700.95" x2="790.73" y2="702.31" stroke="#fff" stroke-width="1.1"/><line x1="788.41" y1="697.47" x2="792.03" y2="699.17" stroke="#fff" stroke-width="1.1"/><line x1="790.17" y1="694.14" x2="793.61" y2="696.17" stroke="#fff" stroke-width="1.1"/><line x1="791.03" y1="690.11" x2="797.50" y2="694.81" stroke="#fff" stroke-width="1.7"/><line x1="794.60" y1="688.05" x2="797.60" y2="690.69" stroke="#fff" stroke-width="1.1"/><line x1="797.22" y1="685.34" x2="799.96" y2="688.26" stroke="#fff" stroke-width="1.1"/><line x1="800.08" y1="682.89" x2="802.54" y2="686.05" stroke="#fff" stroke-width="1.1"/><line x1="803.17" y1="680.73" x2="805.31" y2="684.10" stroke="#fff" stroke-width="1.1"/><line x1="805.76" y1="677.52" x2="809.39" y2="684.65" stroke="#fff" stroke-width="1.7"/><line x1="809.88" y1="677.31" x2="811.35" y2="681.03" stroke="#fff" stroke-width="1.1"/><line x1="813.44" y1="676.09" x2="814.56" y2="679.93" stroke="#fff" stroke-width="1.1"/><line x1="817.10" y1="675.21" x2="817.85" y2="679.14" stroke="#fff" stroke-width="1.1"/><line x1="820.84" y1="674.68" x2="821.21" y2="678.66" stroke="#fff" stroke-width="1.1"/><line x1="824.60" y1="673.00" x2="824.60" y2="681.00" stroke="#fff" stroke-width="1.7"/><line x1="828.36" y1="674.68" x2="827.99" y2="678.66" stroke="#fff" stroke-width="1.1"/><line x1="832.10" y1="675.21" x2="831.35" y2="679.14" stroke="#fff" stroke-width="1.1"/><line x1="835.76" y1="676.09" x2="834.64" y2="679.93" stroke="#fff" stroke-width="1.1"/><line x1="839.32" y1="677.31" x2="837.85" y2="681.03" stroke="#fff" stroke-width="1.1"/><line x1="843.44" y1="677.52" x2="839.81" y2="684.65" stroke="#fff" stroke-width="1.7"/><line x1="846.03" y1="680.73" x2="843.89" y2="684.10" stroke="#fff" stroke-width="1.1"/><line x1="849.12" y1="682.89" x2="846.66" y2="686.05" stroke="#fff" stroke-width="1.1"/><line x1="851.98" y1="685.34" x2="849.24" y2="688.26" stroke="#fff" stroke-width="1.1"/><line x1="854.60" y1="688.05" x2="851.60" y2="690.69" stroke="#fff" stroke-width="1.1"/><line x1="858.17" y1="690.11" x2="851.70" y2="694.81" stroke="#fff" stroke-width="1.7"/><line x1="859.03" y1="694.14" x2="855.59" y2="696.17" stroke="#fff" stroke-width="1.1"/><line x1="860.79" y1="697.47" x2="857.17" y2="699.17" stroke="#fff" stroke-width="1.1"/><line x1="862.24" y1="700.95" x2="858.47" y2="702.31" stroke="#fff" stroke-width="1.1"/><line x1="863.34" y1="704.55" x2="859.47" y2="705.55" stroke="#fff" stroke-width="1.1"/><line x1="865.59" y1="708.01" x2="857.69" y2="709.26" stroke="#fff" stroke-width="1.7"/><line x1="864.52" y1="711.99" x2="860.53" y2="712.24" stroke="#fff" stroke-width="1.1"/><line x1="864.58" y1="715.76" x2="860.58" y2="715.63" stroke="#fff" stroke-width="1.1"/><line x1="864.28" y1="719.51" x2="860.32" y2="719.01" stroke="#fff" stroke-width="1.1"/><line x1="863.64" y1="723.23" x2="859.73" y2="722.35" stroke="#fff" stroke-width="1.1"/><line x1="864.07" y1="727.32" x2="856.46" y2="724.85" stroke="#fff" stroke-width="1.7"/><line x1="861.31" y1="730.39" x2="857.64" y2="728.80" stroke="#fff" stroke-width="1.1"/><line x1="859.65" y1="733.77" x2="856.15" y2="731.84" stroke="#fff" stroke-width="1.1"/><line x1="857.68" y1="736.98" x2="854.37" y2="734.74" stroke="#fff" stroke-width="1.1"/><line x1="855.42" y1="740.00" x2="852.34" y2="737.45" stroke="#fff" stroke-width="1.1"/><line x1="853.94" y1="743.84" x2="848.29" y2="738.19" stroke="#fff" stroke-width="1.7"/><text x="802.68" y="738.72" text-anchor="start" font-family="Liberation Sans" font-size="11" fill="#5ad3dc" stroke="#5ad3dc" stroke-width="0.2">0</text><text x="795.12" y="726.38" text-anchor="start" font-family="Liberation Sans" font-size="11" fill="#5ad3dc" stroke="#5ad3dc" stroke-width="0.2">0.2</text><text x="793.98" y="711.95" text-anchor="start" font-family="Liberation Sans" font-size="11" fill="#5ad3dc" stroke="#5ad3dc" stroke-width="0.2">0.4</text><text x="799.52" y="698.58" text-anchor="start" font-family="Liberation Sans" font-size="11" fill="#5ad3dc" stroke="#5ad3dc" stroke-width="0.2">0.6</text><text x="810.53" y="695.38" text-anchor="start" font-family="Liberation Sans" font-size="11" fill="#25e63a" stroke="#25e63a" stroke-width="0.2">0.8</text><text x="824.60" y="692.00" text-anchor="middle" font-family="Liberation Sans" font-size="11" fill="#25e63a" stroke="#25e63a" stroke-width="0.2">1</text><text x="838.67" y="695.38" text-anchor="end" font-family="Liberation Sans" font-size="11" fill="#25e63a" stroke="#25e63a" stroke-width="0.2">1.2</text><text x="849.68" y="698.58" text-anchor="end" font-family="Liberation Sans" font-size="11" fill="#25e63a" stroke="#25e63a" stroke-width="0.2">1.4</text><text x="855.22" y="711.95" text-anchor="end" font-family="Liberation Sans" font-size="11" fill="#f45c62" stroke="#f45c62" stroke-width="0.2">1.6</text><text x="854.08" y="726.38" text-anchor="end" font-family="Liberation Sans" font-size="11" fill="#f45c62" stroke="#f45c62" stroke-width="0.2">1.8</text><text x="846.52" y="738.72" text-anchor="end" font-family="Liberation Sans" font-size="11" fill="#f45c62" stroke="#f45c62" stroke-width="0.2">2</text><polygon points="807.60,730.50 823.00,710.90 831.40,707.90 827.80,716.30" fill="#5ad3dc"/><path d="M894.93,741.37 A38.0,38.0 0 0 1 891.06,692.16" fill="none" stroke="#5ad3dc" stroke-width="7"/><path d="M891.06,692.16 A38.0,38.0 0 0 1 952.54,692.16" fill="none" stroke="#22ee2c" stroke-width="7"/><path d="M952.54,692.16 A38.0,38.0 0 0 1 948.67,741.37" fill="none" stroke="#f45c62" stroke-width="7"/><line x1="892.46" y1="743.84" x2="898.11" y2="738.19" stroke="#fff" stroke-width="1.7"/><line x1="890.98" y1="740.00" x2="894.06" y2="737.45" stroke="#fff" stroke-width="1.1"/><line x1="888.72" y1="736.98" x2="892.03" y2="734.74" stroke="#fff" stroke-width="1.1"/><line x1="886.75" y1="733.77" x2="890.25" y2="731.84" stroke="#fff" stroke-width="1.1"/><line x1="885.09" y1="730.39" x2="888.76" y2="728.80" stroke="#fff" stroke-width="1.1"/><line x1="882.33" y1="727.32" x2="889.94" y2="724.85" stroke="#fff" stroke-width="1.7"/><line x1="882.76" y1="723.23" x2="886.67" y2="722.35" stroke="#fff" stroke-width="1.1"/><line x1="882.12" y1="719.51" x2="886.08" y2="719.01" stroke="#fff" stroke-width="1.1"/><line x1="881.82" y1="715.76" x2="885.82" y2="715.63" stroke="#fff" stroke-width="1.1"/><line x1="881.88" y1="711.99" x2="885.87" y2="712.24" stroke="#fff" stroke-width="1.1"/><line x1="880.81" y1="708.01" x2="888.71" y2="709.26" stroke="#fff" stroke-width="1.7"/><line x1="883.06" y1="704.55" x2="886.93" y2="705.55" stroke="#fff" stroke-width="1.1"/><line x1="884.16" y1="700.95" x2="887.93" y2="702.31" stroke="#fff" stroke-width="1.1"/><line x1="885.61" y1="697.47" x2="889.23" y2="699.17" stroke="#fff" stroke-width="1.1"/><line x1="887.37" y1="694.14" x2="890.81" y2="696.17" stroke="#fff" stroke-width="1.1"/><line x1="888.23" y1="690.11" x2="894.70" y2="694.81" stroke="#fff" stroke-width="1.7"/><line x1="891.80" y1="688.05" x2="894.80" y2="690.69" stroke="#fff" stroke-width="1.1"/><line x1="894.42" y1="685.34" x2="897.16" y2="688.26" stroke="#fff" stroke-width="1.1"/><line x1="897.28" y1="682.89" x2="899.74" y2="686.05" stroke="#fff" stroke-width="1.1"/><line x1="900.37" y1="680.73" x2="902.51" y2="684.10" stroke="#fff" stroke-width="1.1"/><line x1="902.96" y1="677.52" x2="906.59" y2="684.65" stroke="#fff" stroke-width="1.7"/><line x1="907.08" y1="677.31" x2="908.55" y2="681.03" stroke="#fff" stroke-width="1.1"/><line x1="910.64" y1="676.09" x2="911.76" y2="679.93" stroke="#fff" stroke-width="1.1"/><line x1="914.30" y1="675.21" x2="915.05" y2="679.14" stroke="#fff" stroke-width="1.1"/><line x1="918.04" y1="674.68" x2="918.41" y2="678.66" stroke="#fff" stroke-width="1.1"/><line x1="921.80" y1="673.00" x2="921.80" y2="681.00" stroke="#fff" stroke-width="1.7"/><line x1="925.56" y1="674.68" x2="925.19" y2="678.66" stroke="#fff" stroke-width="1.1"/><line x1="929.30" y1="675.21" x2="928.55" y2="679.14" stroke="#fff" stroke-width="1.1"/><line x1="932.96" y1="676.09" x2="931.84" y2="679.93" stroke="#fff" stroke-width="1.1"/><line x1="936.52" y1="677.31" x2="935.05" y2="681.03" stroke="#fff" stroke-width="1.1"/><line x1="940.64" y1="677.52" x2="937.01" y2="684.65" stroke="#fff" stroke-width="1.7"/><line x1="943.23" y1="680.73" x2="941.09" y2="684.10" stroke="#fff" stroke-width="1.1"/><line x1="946.32" y1="682.89" x2="943.86" y2="686.05" stroke="#fff" stroke-width="1.1"/><line x1="949.18" y1="685.34" x2="946.44" y2="688.26" stroke="#fff" stroke-width="1.1"/><line x1="951.80" y1="688.05" x2="948.80" y2="690.69" stroke="#fff" stroke-width="1.1"/><line x1="955.37" y1="690.11" x2="948.90" y2="694.81" stroke="#fff" stroke-width="1.7"/><line x1="956.23" y1="694.14" x2="952.79" y2="696.17" stroke="#fff" stroke-width="1.1"/><line x1="957.99" y1="697.47" x2="954.37" y2="699.17" stroke="#fff" stroke-width="1.1"/><line x1="959.44" y1="700.95" x2="955.67" y2="702.31" stroke="#fff" stroke-width="1.1"/><line x1="960.54" y1="704.55" x2="956.67" y2="705.55" stroke="#fff" stroke-width="1.1"/><line x1="962.79" y1="708.01" x2="954.89" y2="709.26" stroke="#fff" stroke-width="1.7"/><line x1="961.72" y1="711.99" x2="957.73" y2="712.24" stroke="#fff" stroke-width="1.1"/><line x1="961.78" y1="715.76" x2="957.78" y2="715.63" stroke="#fff" stroke-width="1.1"/><line x1="961.48" y1="719.51" x2="957.52" y2="719.01" stroke="#fff" stroke-width="1.1"/><line x1="960.84" y1="723.23" x2="956.93" y2="722.35" stroke="#fff" stroke-width="1.1"/><line x1="961.27" y1="727.32" x2="953.66" y2="724.85" stroke="#fff" stroke-width="1.7"/><line x1="958.51" y1="730.39" x2="954.84" y2="728.80" stroke="#fff" stroke-width="1.1"/><line x1="956.85" y1="733.77" x2="953.35" y2="731.84" stroke="#fff" stroke-width="1.1"/><line x1="954.88" y1="736.98" x2="951.57" y2="734.74" stroke="#fff" stroke-width="1.1"/><line x1="952.62" y1="740.00" x2="949.54" y2="737.45" stroke="#fff" stroke-width="1.1"/><line x1="951.14" y1="743.84" x2="945.49" y2="738.19" stroke="#fff" stroke-width="1.7"/><text x="899.88" y="738.72" text-anchor="start" font-family="Liberation Sans" font-size="11" fill="#5ad3dc" stroke="#5ad3dc" stroke-width="0.2">0</text><text x="892.32" y="726.38" text-anchor="start" font-family="Liberation Sans" font-size="11" fill="#5ad3dc" stroke="#5ad3dc" stroke-width="0.2">1</text><text x="891.18" y="711.95" text-anchor="start" font-family="Liberation Sans" font-size="11" fill="#5ad3dc" stroke="#5ad3dc" stroke-width="0.2">2</text><text x="896.72" y="698.58" text-anchor="start" font-family="Liberation Sans" font-size="11" fill="#5ad3dc" stroke="#5ad3dc" stroke-width="0.2">3</text><text x="907.73" y="695.38" text-anchor="start" font-family="Liberation Sans" font-size="11" fill="#25e63a" stroke="#25e63a" stroke-width="0.2">4</text><text x="921.80" y="692.00" text-anchor="middle" font-family="Liberation Sans" font-size="11" fill="#25e63a" stroke="#25e63a" stroke-width="0.2">5</text><text x="935.87" y="695.38" text-anchor="end" font-family="Liberation Sans" font-size="11" fill="#25e63a" stroke="#25e63a" stroke-width="0.2">6</text><text x="946.88" y="698.58" text-anchor="end" font-family="Liberation Sans" font-size="11" fill="#25e63a" stroke="#25e63a" stroke-width="0.2">7</text><text x="952.42" y="711.95" text-anchor="end" font-family="Liberation Sans" font-size="11" fill="#f45c62" stroke="#f45c62" stroke-width="0.2">8</text><text x="951.28" y="726.38" text-anchor="end" font-family="Liberation Sans" font-size="11" fill="#f45c62" stroke="#f45c62" stroke-width="0.2">9</text><text x="943.72" y="738.72" text-anchor="end" font-family="Liberation Sans" font-size="11" fill="#f45c62" stroke="#f45c62" stroke-width="0.2">10</text><polygon points="904.80,730.50 920.20,710.90 928.60,707.90 925.00,716.30" fill="#5ad3dc"/></svg><div class="tab" style="left:166.10000000000002px;width:107.59999999999997px">控制面板</div><div class="tab" style="left:298.0px;width:107.0px">实时曲线</div><div class="tab" style="left:430.0px;width:107.30000000000001px">参数配置</div><div class="lb" style="left:248px;top:88.5px;width:200px;height:20px;line-height:20px;text-align:center;font-size:10px;color:#ececec;font-weight:normal">储罐上进液阀</div><div class="lb" style="left:244px;top:130.5px;width:200px;height:20px;line-height:20px;text-align:center;font-size:10px;color:#ececec;font-weight:normal">储罐至2#泵回气阀</div><div class="lb" style="left:249.8px;top:307.5px;width:200px;height:20px;line-height:20px;text-align:center;font-size:10px;color:#ececec;font-weight:normal">储罐下进液阀</div><div class="lb" style="left:250.5px;top:351.6px;width:200px;height:20px;line-height:20px;text-align:center;font-size:10px;color:#ececec;font-weight:normal">储罐至2#泵出液阀</div><div class="lb" style="left:249.5px;top:463px;width:200px;height:20px;line-height:20px;text-align:center;font-size:10px;color:#ececec;font-weight:normal">储罐至1#泵回气阀</div><div class="lb" style="left:251px;top:520px;width:200px;height:20px;line-height:20px;text-align:center;font-size:10px;color:#ececec;font-weight:normal">储罐至1#泵出液阀</div><div class="lb" style="left:881px;top:134.5px;width:200px;height:20px;line-height:20px;text-align:center;font-size:10px;color:#ececec;font-weight:normal">泵2加液阀</div><div class="lb" style="left:881px;top:379px;width:200px;height:20px;line-height:20px;text-align:center;font-size:10px;color:#ececec;font-weight:normal">泵1加液阀</div><div class="lb" style="left:803px;top:178px;height:20px;line-height:20px;font-size:10px;color:#ececec;font-weight:normal">泄放阀2</div><div class="lb" style="left:892.5px;top:178px;height:20px;line-height:20px;font-size:10px;color:#ececec;font-weight:normal">卸车阀</div><div class="lb" style="left:803px;top:279.5px;height:20px;line-height:20px;font-size:10px;color:#ececec;font-weight:normal">泄放阀1</div><div class="lb" style="left:894px;top:273.3px;height:20px;line-height:20px;font-size:10px;color:#ececec;font-weight:normal">增压器</div><div class="lb" style="left:894px;top:288.2px;height:20px;line-height:20px;font-size:10px;color:#ececec;font-weight:normal">进口阀</div><div class="lb" style="left:953px;top:442.3px;height:20px;line-height:20px;font-size:10px;color:#ececec;font-weight:normal">增压器</div><div class="lb" style="left:953px;top:457.8px;height:20px;line-height:20px;font-size:10px;color:#ececec;font-weight:normal">出口阀</div><div class="lb" style="left:1177.4px;top:92.6px;height:26px;line-height:26px;font-size:13px;color:#ececec;font-weight:normal">4#加液机</div><div class="lb" style="left:1177px;top:218px;height:26px;line-height:26px;font-size:13px;color:#ececec;font-weight:normal">2#双枪加液机</div><div class="lb" style="left:1179px;top:345.9px;height:26px;line-height:26px;font-size:13px;color:#ececec;font-weight:normal">3#加液机</div><div class="lb" style="left:1177px;top:472.7px;height:26px;line-height:26px;font-size:13px;color:#ececec;font-weight:normal">1#双枪加液机</div><div class="tb" style="left:208.4px;top:165.3px;width:35.0px;height:24.19999999999999px"><span class="g" style="">压力</span></div><div class="tb tu" style="left:243.4px;top:165.3px;width:36.599999999999994px;height:24.19999999999999px">MPa</div><div class="tb" style="left:208.4px;top:190.6px;width:35.0px;height:24.200000000000017px"><span class="g" style="">液位</span></div><div class="tb tu" style="left:243.4px;top:190.6px;width:34.099999999999994px;height:24.200000000000017px">mm</div><div class="tb" style="left:208.4px;top:215.9px;width:35.0px;height:24.299999999999983px"><span class="g" style="">吨位</span></div><div class="tb tu" style="left:243.4px;top:215.9px;width:13.099999999999994px;height:24.299999999999983px"></div><div class="tb" style="left:208.4px;top:241.3px;width:35.0px;height:24.69999999999999px"><span class="g" style="">质量</span></div><div class="tb tu" style="left:243.4px;top:241.3px;width:28.299999999999983px;height:24.69999999999999px">m³</div><div class="tb" style="left:664px;top:101.2px;width:83.60000000000002px;height:24.200000000000003px"><span class="g" style="">2#泵出口压力</span></div><div class="tb tu" style="left:747.6px;top:101.2px;width:36.19999999999993px;height:24.200000000000003px">MPa</div><div class="tb" style="left:456.7px;top:138px;width:83.30000000000001px;height:24px"><span class="g" style="">2#泵进口压力</span></div><div class="tb tu" style="left:540px;top:138px;width:36.200000000000045px;height:24px">MPa</div><div class="tb" style="left:456.7px;top:164px;width:94.90000000000003px;height:24.19999999999999px"><span class="g" style="">2#泵溢流口温度</span></div><div class="tb tu" style="left:551.6px;top:164px;width:24.0px;height:24.19999999999999px">℃</div><div class="tb" style="left:655px;top:145px;width:60.5px;height:24px"><span class="g" style="">2#泵频率</span></div><div class="tb tu" style="left:715.5px;top:145px;width:28.200000000000045px;height:24px">HZ</div><div class="tb" style="left:655px;top:171.5px;width:60.5px;height:24.0px"><span class="g" style="">2#泵电流</span></div><div class="tb tu" style="left:715.5px;top:171.5px;width:20.299999999999955px;height:24.0px">A</div><div class="tb" style="left:468px;top:256px;width:83.60000000000002px;height:23.80000000000001px"><span class="g" style="">2#泵进口温度</span></div><div class="tb tu" style="left:551.6px;top:256px;width:24.399999999999977px;height:23.80000000000001px">℃</div><div class="tb" style="left:599.2px;top:345.4px;width:82.29999999999995px;height:23.600000000000023px"><span class="g" style="">1#泵出口压力</span></div><div class="tb tu" style="left:681.5px;top:345.4px;width:36.89999999999998px;height:23.600000000000023px">MPa</div><div class="tb" style="left:394.5px;top:379.4px;width:82.69999999999999px;height:23.700000000000045px"><span class="g" style="">1#泵进口压力</span></div><div class="tb tu" style="left:477.2px;top:379.4px;width:36.19999999999999px;height:23.700000000000045px">MPa</div><div class="tb" style="left:394.5px;top:404.5px;width:94.39999999999998px;height:23.80000000000001px"><span class="g" style="">1#泵溢流口温度</span></div><div class="tb tu" style="left:488.9px;top:404.5px;width:23.700000000000045px;height:23.80000000000001px">℃</div><div class="tb" style="left:604.7px;top:418.2px;width:60.09999999999991px;height:23.5px"><span class="g" style="">1#泵频率</span></div><div class="tb tu" style="left:664.8px;top:418.2px;width:28.40000000000009px;height:23.5px">HZ</div><div class="tb" style="left:604.7px;top:443.9px;width:60.09999999999991px;height:24.0px"><span class="g" style="">1#泵电流</span></div><div class="tb tu" style="left:664.8px;top:443.9px;width:20.300000000000068px;height:24.0px">A</div><div class="tb" style="left:397.3px;top:484.1px;width:82.69999999999999px;height:23.69999999999999px"><span class="g" style="">1#泵进口温度</span></div><div class="tb tu" style="left:480px;top:484.1px;width:24.19999999999999px;height:23.69999999999999px">℃</div><div class="tb" style="left:1119px;top:571.7px;width:79.59999999999991px;height:27.799999999999955px"><span class="g" style=";font-size:13px">仪表风压力</span></div><div class="tb tu" style="left:1198.6px;top:571.7px;width:14.800000000000182px;height:27.799999999999955px"></div><div class="st" style="top:26.700000000000003px"><i></i><span>通讯状态</span></div><div class="st" style="top:59.8px"><i></i><span>1#潜液泵使能</span></div><div class="st" style="top:84.9px"><i></i><span>1#泵自动状态</span></div><div class="st" style="top:112.6px"><i></i><span>1#泵手动状态</span></div><div class="st" style="top:138.5px"><i></i><span>1#泵待机状态</span></div><div class="st" style="top:164.5px"><i></i><span>1#泵卸车状态</span></div><div class="st" style="top:192.6px"><i></i><span>1#泵加液状态</span></div><div class="st" style="top:218.2px"><i></i><span>1#泵调压状态</span></div><div class="st" style="top:260.1px"><i></i><span>2#潜液泵使能</span></div><div class="st" style="top:284.2px"><i></i><span>2#泵自动状态</span></div><div class="st" style="top:312.6px"><i></i><span>2#泵手动状态</span></div><div class="st" style="top:338.3px"><i></i><span>2#泵待机状态</span></div><div class="st" style="top:364.7px"><i></i><span>2#泵卸车状态</span></div><div class="st" style="top:392.5px"><i></i><span>2#泵加液状态</span></div><div class="st" style="top:418.3px"><i></i><span>2#泵调压状态</span></div><div class="st" style="top:456.5px"><i></i><span>恒压模式状态</span></div><div class="st" style="top:482.9px"><i></i><span>定频模式状态</span></div><div class="st" style="top:511.20000000000005px"><i></i><span>LNG上进液</span></div><div class="st" style="top:536.6px"><i></i><span>LNG下进液</span></div><div class="st" style="top:575.8px"><i></i><span>正在卸车状态</span></div><div class="st" style="top:604.5px"><i></i><span>正在增压状态</span></div><div class="st" style="top:629.7px"><i></i><span>正在增温状态</span></div><div class="sep" style="left:1261px;top:53.8px;width:143px"></div><div class="sep" style="left:1261px;top:250.0px;width:143px"></div><div class="sep" style="left:1261px;top:562.8px;width:143px"></div><div class="panel" style="left:21px;top:584.5px;width:349px;height:205px"></div><div style="position:absolute;left:21px;top:584.5px;width:15px;height:2.5px;background:#a6cbea"></div><div style="position:absolute;left:21px;top:584.5px;width:2px;height:10px;background:#a6cbea"></div><div style="position:absolute;left:355px;top:584.5px;width:15px;height:2.5px;background:#a6cbea"></div><div style="position:absolute;left:368px;top:584.5px;width:2px;height:10px;background:#a6cbea"></div><div style="position:absolute;left:21px;top:787.0px;width:15px;height:2.5px;background:#a6cbea"></div><div style="position:absolute;left:21px;top:779.5px;width:2px;height:10px;background:#a6cbea"></div><div style="position:absolute;left:355px;top:787.0px;width:15px;height:2.5px;background:#a6cbea"></div><div style="position:absolute;left:368px;top:779.5px;width:2px;height:10px;background:#a6cbea"></div><div class="sep" style="left:22px;top:685px;width:344px"></div><div class="it" style="left:30px;top:588px;font-size:16px;font-weight:bold;color:#fff;line-height:20px;-webkit-text-stroke:0.35px #fff">1#潜液泵信息</div><div class="it" style="left:32px;top:623px;line-height:16px">预冷时间:</div><div class="it" style="left:178px;top:622px;line-height:16px">运行时间:</div><div class="blk" style="left:28.7px;top:646.6px;width:52.3px;height:23px"></div><div class="it" style="left:82px;top:650.5px;line-height:17px;font-size:14px">分</div><div class="blk" style="left:102px;top:646.6px;width:48px;height:23px"></div><div class="it" style="left:152px;top:650.5px;line-height:17px;font-size:14px">秒</div><div class="blk" style="left:181px;top:646.6px;width:52.599999999999994px;height:23px"></div><div class="it" style="left:235px;top:650.5px;line-height:17px;font-size:14px">时</div><div class="blk" style="left:254px;top:646.6px;width:48px;height:23px"></div><div class="it" style="left:302.5px;top:650.5px;line-height:17px;font-size:14px">分</div><div class="it" style="left:28.5px;top:698.7px;font-size:16px;font-weight:bold;color:#fff;line-height:20px;-webkit-text-stroke:0.35px #fff">1#潜液泵信息</div><div class="it" style="left:30.5px;top:733px;line-height:16px">预冷时间:</div><div class="it" style="left:176.5px;top:732px;line-height:16px">运行时间:</div><div class="blk" style="left:27.2px;top:757.0px;width:52.3px;height:23px"></div><div class="it" style="left:80.5px;top:760.9px;line-height:17px;font-size:14px">分</div><div class="blk" style="left:100.5px;top:757.0px;width:48px;height:23px"></div><div class="it" style="left:150.5px;top:760.9px;line-height:17px;font-size:14px">秒</div><div class="blk" style="left:179.5px;top:757.0px;width:52.599999999999994px;height:23px"></div><div class="it" style="left:233.5px;top:760.9px;line-height:17px;font-size:14px">时</div><div class="blk" style="left:252.5px;top:757.0px;width:48px;height:23px"></div><div class="it" style="left:301.0px;top:760.9px;line-height:17px;font-size:14px">分</div><div class="panel" style="left:375px;top:586px;width:349px;height:67px"></div><div style="position:absolute;left:375px;top:585.4px;width:15px;height:2.3px;background:#a6cbea"></div><div style="position:absolute;left:375px;top:585.4px;width:1.5px;height:4px;background:#a6cbea"></div><div style="position:absolute;left:709px;top:585.4px;width:15px;height:2.3px;background:#a6cbea"></div><div style="position:absolute;left:722.5px;top:585.4px;width:1.5px;height:4px;background:#a6cbea"></div><div style="position:absolute;left:375px;top:650.7px;width:15px;height:2.3px;background:#a6cbea"></div><div style="position:absolute;left:375px;top:649px;width:1.5px;height:4px;background:#a6cbea"></div><div style="position:absolute;left:709px;top:650.7px;width:15px;height:2.3px;background:#a6cbea"></div><div style="position:absolute;left:722.5px;top:649px;width:1.5px;height:4px;background:#a6cbea"></div><svg style="position:absolute;left:400px;top:590px" width="60" height="46" viewBox="400 590 60 46"><path d="M412.3,607.9 L417.9,607.9 L427.1,598.4 L427.1,626.3 L417.9,616.8 L412.3,616.8 Z" fill="#1ef024"/><path d="M429,606.4 A6.4,6.4 0 0 1 429,618.4" fill="none" stroke="#1ef024" stroke-width="2.3"/><path d="M429,599.6 A12.8,12.8 0 0 1 429,625.2" fill="none" stroke="#1ef024" stroke-width="2.3"/></svg><div class="btn" style="left:478.6px">消音</div><div class="btn" style="left:595.7px">复位</div><div style="position:absolute;left:972.6px;top:655px;width:431px;height:139px;background:#fff"></div><div style="position:absolute;left:972.6px;top:655px;width:420px;height:28.3px;background:#e9f0fa"></div><div style="position:absolute;left:1057.6px;top:655px;width:1px;height:28.3px;background:#e2eaf5"></div><div style="position:absolute;left:1141.3px;top:655px;width:1px;height:28.3px;background:#e2eaf5"></div><div style="position:absolute;left:1225px;top:655px;width:1px;height:28.3px;background:#e2eaf5"></div><div style="position:absolute;left:1308.7px;top:655px;width:1px;height:28.3px;background:#e2eaf5"></div><div class="th" style="left:979.5px">序号</div><div class="th" style="left:1063.6px">设备名称</div><div class="th" style="left:1147px">点位分组</div><div class="th" style="left:1231px">报警点位</div><div class="th" style="left:1315px">报警时间</div><div style="position:absolute;left:1393px;top:683.3px;width:10.5px;height:110px;background:#f1f1f1"></div><div style="position:absolute;left:1394.5px;top:696.5px;width:8px;height:77px;background:#c1c1c1"></div><svg style="position:absolute;left:1393px;top:683px" width="11" height="111"><path d="M2.5,9.5 L5.5,6 L8.5,9.5 Z" fill="#777"/><path d="M2.5,97 L5.5,100.5 L8.5,97 Z" fill="#505050"/></svg><svg style="position:absolute;left:1160px;top:710px" width="48" height="36" viewBox="0 0 48 36"><ellipse cx="24" cy="28" rx="23" ry="4" fill="#f5f5f5"/><path d="M7,14 L13,4 L35,4 L41,14 L41,26 L7,26 Z" fill="#fafafa" stroke="#d9d9d9" stroke-width="1"/><path d="M7,14 L17,14 Q17,18 24,18 Q31,18 31,14 L41,14" fill="#f0f0f0" stroke="#d9d9d9" stroke-width="1"/></svg><div class="lb" style="left:1163px;top:748px;font-size:10px;color:#b4b4b4;line-height:16px">暂无数据</div></body></html>
